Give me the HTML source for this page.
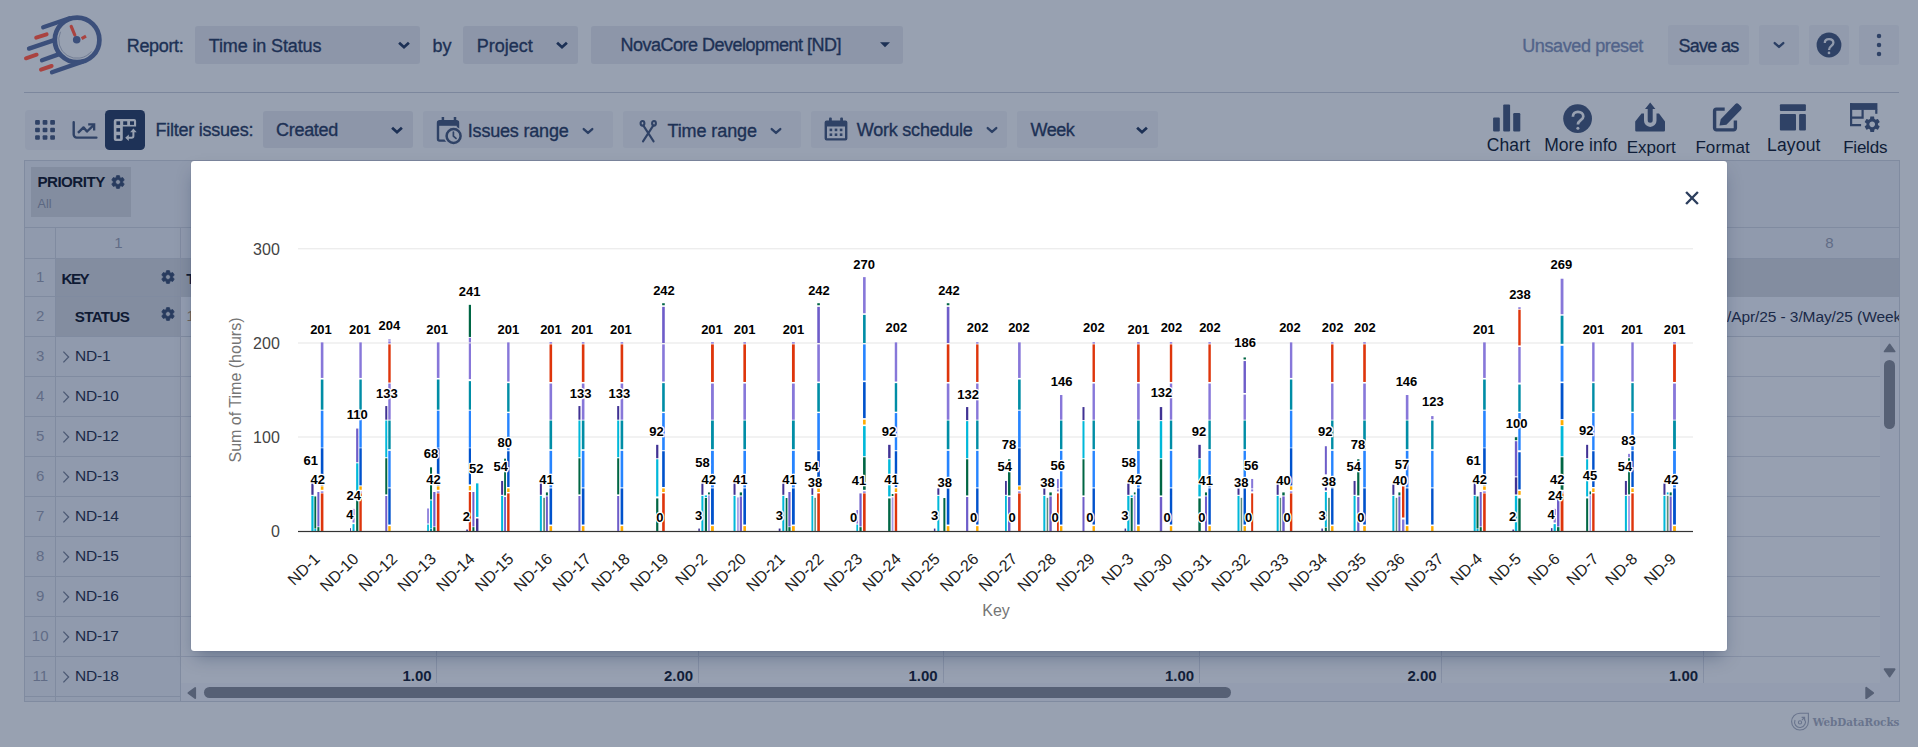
<!DOCTYPE html>
<html lang="en"><head><meta charset="utf-8"><title>Time in Status - Chart</title>
<style>html,body{margin:0;padding:0}body{width:1918px;height:747px;overflow:hidden;position:relative;background:#98a1b1;font-family:'Liberation Sans', sans-serif}span{display:block}</style></head>
<body>
<svg style="position:absolute;left:20.0px;top:8.0px;" width="90" height="72" viewBox="0 0 90 72">
<g fill="none" stroke-linecap="round">
 <g stroke="#3b4f7b" stroke-width="4.3">
  <circle cx="57.1" cy="31.9" r="22.3" stroke-width="4.7"/>
  <path d="M23.2 19.2 L49.5 10.2"/>
  <path d="M9 40.6 L33.5 32.4"/>
  <path d="M22 52.2 L38.5 46.4"/>
  <path d="M32 64.3 L62.5 53.6"/>
 </g>
 <path d="M40.4 24.1 A18.4 18.4 0 0 0 71.2 43.7" stroke="#68748d" stroke-width="0.8"/>
 <g stroke="#aa4340" stroke-linecap="butt">
  <path d="M16.2 29.6 L26.6 26.4" stroke-width="4" stroke-linecap="round"/>
  <path d="M6 50.3 L16.6 46.7" stroke-width="4" stroke-linecap="round"/>
  <path d="M21 61.6 L31.6 58" stroke-width="4" stroke-linecap="round"/>
  <path d="M51.2 18.4 L54.8 27" stroke-width="3.2" stroke-linecap="round"/>
  <path d="M61.6 30.6 L66 28.2" stroke-width="3.2"/>
 </g>
 <circle cx="56.7" cy="31.8" r="3.8" fill="#3b4f7b" stroke="none"/>
</g></svg>
<span style="position:absolute;left:126.80px;top:35.00px;font:400 18px/23px 'Liberation Sans', sans-serif;color:#1d3155;letter-spacing:-0.362px;white-space:pre;-webkit-text-stroke:0.35px #1d3155;">Report:</span>
<div style="position:absolute;left:195.0px;top:26.0px;width:225.0px;height:38.0px;background:#8d96a9;border-radius:3px;"></div>
<span style="position:absolute;left:208.80px;top:35.00px;font:400 18px/23px 'Liberation Sans', sans-serif;color:#1d3155;letter-spacing:-0.134px;white-space:pre;-webkit-text-stroke:0.35px #1d3155;">Time in Status</span>
<svg style="position:absolute;left:396.3px;top:36.6px;" width="16" height="16" viewBox="0 0 16 16"><path d="M3.10 5.80 L8 10.20 L12.90 5.80" fill="none" stroke="#1c3055" stroke-width="2.8" stroke-linecap="butt" stroke-linejoin="miter"/></svg>
<span style="position:absolute;left:432.60px;top:35.00px;font:400 18px/23px 'Liberation Sans', sans-serif;color:#1d3155;letter-spacing:-0.108px;white-space:pre;-webkit-text-stroke:0.35px #1d3155;">by</span>
<div style="position:absolute;left:463.3px;top:26.0px;width:114.7px;height:38.0px;background:#8d96a9;border-radius:3px;"></div>
<span style="position:absolute;left:476.80px;top:35.00px;font:400 18px/23px 'Liberation Sans', sans-serif;color:#1d3155;letter-spacing:-0.004px;white-space:pre;-webkit-text-stroke:0.35px #1d3155;">Project</span>
<svg style="position:absolute;left:554.2px;top:36.6px;" width="16" height="16" viewBox="0 0 16 16"><path d="M3.10 5.80 L8 10.20 L12.90 5.80" fill="none" stroke="#1c3055" stroke-width="2.8" stroke-linecap="butt" stroke-linejoin="miter"/></svg>
<div style="position:absolute;left:591.2px;top:26.0px;width:311.8px;height:38.0px;background:#8d96a9;border-radius:3px;"></div>
<span style="position:absolute;left:620.40px;top:34.20px;font:400 18px/23px 'Liberation Sans', sans-serif;color:#1d3155;letter-spacing:-0.504px;white-space:pre;-webkit-text-stroke:0.35px #1d3155;">NovaCore Development [ND]</span>
<svg style="position:absolute;left:878.0px;top:40.0px;" width="14" height="10" viewBox="0 0 14 10"><path d="M2 2.2 L12 2.2 L7 7.3 Z" fill="#1d3155"/></svg>
<span style="position:absolute;left:1522.20px;top:35.20px;font:400 18px/23px 'Liberation Sans', sans-serif;color:#52648a;letter-spacing:-0.377px;white-space:pre;-webkit-text-stroke:0.35px #52648a;">Unsaved preset</span>
<div style="position:absolute;left:1668.0px;top:25.0px;width:81.0px;height:40.0px;background:#929bad;border-radius:3px;"></div>
<span style="position:absolute;left:1678.40px;top:35.20px;font:400 18px/23px 'Liberation Sans', sans-serif;color:#1d3155;letter-spacing:-0.692px;white-space:pre;-webkit-text-stroke:0.35px #1d3155;">Save as</span>
<div style="position:absolute;left:1759.0px;top:25.0px;width:40.0px;height:40.0px;background:#929bad;border-radius:3px;"></div>
<svg style="position:absolute;left:1771.0px;top:36.8px;" width="16" height="16" viewBox="0 0 16 16"><path d="M3.70 6.05 L8 9.95 L12.30 6.05" fill="none" stroke="#2b3f64" stroke-width="2.3" stroke-linecap="round" stroke-linejoin="round"/></svg>
<div style="position:absolute;left:1809.0px;top:25.0px;width:40.0px;height:40.0px;background:#929bad;border-radius:3px;"></div>
<svg style="position:absolute;left:1815.0px;top:31.0px;" width="28" height="28" viewBox="0 0 28 28"><circle cx="14" cy="14" r="12.4" fill="#2f4266"/>
<path d="M9.8 12 C9.8 9.3 11.6 8.1 14 8.1 C16.6 8.1 18.4 9.5 18.4 11.8 C18.4 15 14 14.9 14 18.9" fill="none" stroke="#929bad" stroke-width="2.3"/>
<circle cx="14" cy="21.9" r="1.35" fill="#929bad"/></svg>
<div style="position:absolute;left:1859.0px;top:25.0px;width:40.0px;height:40.0px;background:#929bad;border-radius:3px;"></div>
<svg style="position:absolute;left:1873.0px;top:31.0px;" width="12" height="28" viewBox="0 0 12 28"><g fill="#2f4266"><circle cx="6" cy="5.1" r="2.25"/><circle cx="6" cy="14" r="2.25"/><circle cx="6" cy="22.9" r="2.25"/></g></svg>
<div style="position:absolute;left:24.0px;top:92.0px;width:1875.0px;height:1.0px;background:#7c879d;border-radius:0px;"></div>
<div style="position:absolute;left:25.0px;top:110.0px;width:120.0px;height:40.0px;background:#929bad;border-radius:4px;"></div>
<svg style="position:absolute;left:35.0px;top:120.0px;" width="21" height="21" viewBox="0 0 21 21"><g fill="#2f4266"><rect x="0.10" y="0.10" width="4.75" height="4.65" rx="1"/><rect x="0.10" y="7.65" width="4.75" height="4.65" rx="1"/><rect x="0.10" y="15.20" width="4.75" height="4.65" rx="1"/><rect x="7.65" y="0.10" width="4.75" height="4.65" rx="1"/><rect x="7.65" y="7.65" width="4.75" height="4.65" rx="1"/><rect x="7.65" y="15.20" width="4.75" height="4.65" rx="1"/><rect x="15.20" y="0.10" width="4.75" height="4.65" rx="1"/><rect x="15.20" y="7.65" width="4.75" height="4.65" rx="1"/><rect x="15.20" y="15.20" width="4.75" height="4.65" rx="1"/></g></svg>
<svg style="position:absolute;left:70.0px;top:118.0px;" width="30" height="24" viewBox="0 0 30 24"><g fill="none" stroke="#2f4266" stroke-width="2.4" stroke-linecap="round" stroke-linejoin="round">
<path d="M3.7 4.3 V16.6 a3 3 0 0 0 3 3 H26.4"/>
<path d="M8 14.8 L13.5 9.4 L17 13.5 L23.4 7.4" stroke-linecap="butt"/></g>
<path d="M18.2 5.2 H25.3 V12.4 L23 12.4 L23 9 L21.6 7.5 L18.2 7.5 Z" fill="#2f4266"/></svg>
<div style="position:absolute;left:105.0px;top:110.0px;width:40.0px;height:40.0px;background:#1e3257;border-radius:4.6px;"></div>
<svg style="position:absolute;left:112.0px;top:117.0px;" width="27" height="26" viewBox="0 0 27 26"><path d="M3.8 1.9 H22.1 a2 2 0 0 1 2 2 V9.5 H10.8 V22 a2 2 0 0 1 -2 2 H3.8 a2 2 0 0 1 -2 -2 V3.9 a2 2 0 0 1 2 -2 Z" fill="#98a1b1"/>
<g fill="#1e3257"><rect x="4.4" y="4.3" width="3.7" height="3.6"/><rect x="11.2" y="4.3" width="4" height="3.6"/><rect x="18" y="4.3" width="4" height="3.6"/>
<rect x="4.4" y="11.1" width="3.7" height="3.6"/><rect x="4.4" y="18.2" width="3.7" height="3.5"/></g>
<path d="M15.8 20.8 H19.6 Q21.4 20.8 21.4 19 V14.6" fill="none" stroke="#98a1b1" stroke-width="2"/>
<path d="M13.2 20.8 L16.8 17.6 V24 Z M21.4 11.4 L18.1 15.2 H24.7 Z" fill="#98a1b1"/></svg>
<span style="position:absolute;left:155.40px;top:119.40px;font:400 18px/23px 'Liberation Sans', sans-serif;color:#1d3155;letter-spacing:-0.231px;white-space:pre;-webkit-text-stroke:0.35px #1d3155;">Filter issues:</span>
<div style="position:absolute;left:263.0px;top:111.0px;width:150.0px;height:37.0px;background:#8d96a9;border-radius:3px;"></div>
<span style="position:absolute;left:276.00px;top:119.40px;font:400 18px/23px 'Liberation Sans', sans-serif;color:#1d3155;letter-spacing:-0.292px;white-space:pre;-webkit-text-stroke:0.35px #1d3155;">Created</span>
<svg style="position:absolute;left:389.0px;top:122.0px;" width="16" height="16" viewBox="0 0 16 16"><path d="M3.10 5.80 L8 10.20 L12.90 5.80" fill="none" stroke="#1c3055" stroke-width="2.8" stroke-linecap="butt" stroke-linejoin="miter"/></svg>
<div style="position:absolute;left:423.2px;top:111.0px;width:189.8px;height:37.0px;background:#929bad;border-radius:3px;"></div>
<svg style="position:absolute;left:435.0px;top:116.0px;" width="28" height="30" viewBox="0 0 28 30"><g fill="none" stroke="#2f4266" stroke-width="2.4" stroke-linejoin="round" stroke-linecap="round">
<path d="M4.6 5.2 H21.4 a1.6 1.6 0 0 1 1.6 1.6 V23 a1.6 1.6 0 0 1 -1.6 1.6 H4.6 a1.6 1.6 0 0 1 -1.6 -1.6 V6.8 a1.6 1.6 0 0 1 1.6 -1.6 Z"/>
<path d="M7.9 1.1 V5 M20 1.1 V5" stroke-width="2.5" stroke-linecap="butt"/></g>
<path d="M2.4 5 H23.6 V9.8 H2.4 Z" fill="#2f4266"/>
<circle cx="18.6" cy="20" r="9.6" fill="#929bad"/>
<circle cx="18.6" cy="20" r="7" fill="none" stroke="#2f4266" stroke-width="2.5"/>
<path d="M18.4 16 V20.2 L21 22.4" fill="none" stroke="#2f4266" stroke-width="1.7" stroke-linecap="round"/></svg>
<span style="position:absolute;left:467.80px;top:120.20px;font:400 18px/23px 'Liberation Sans', sans-serif;color:#1d3155;letter-spacing:-0.189px;white-space:pre;-webkit-text-stroke:0.35px #1d3155;">Issues range</span>
<svg style="position:absolute;left:579.5px;top:122.6px;" width="16" height="16" viewBox="0 0 16 16"><path d="M3.70 6.05 L8 9.95 L12.30 6.05" fill="none" stroke="#2b3f64" stroke-width="2.3" stroke-linecap="round" stroke-linejoin="round"/></svg>
<div style="position:absolute;left:623.0px;top:111.0px;width:178.0px;height:37.0px;background:#929bad;border-radius:3px;"></div>
<svg style="position:absolute;left:637.0px;top:118.0px;" width="24" height="26" viewBox="0 0 24 26"><g fill="none" stroke="#2f4266" stroke-width="2.1" stroke-linecap="round">
<path d="M6.4 7.6 L16.6 23.4 M16.2 7.6 L6 23.4"/>
<ellipse cx="5.5" cy="5.3" rx="1.9" ry="2.3"/><ellipse cx="17" cy="5.3" rx="1.9" ry="2.3"/></g></svg>
<span style="position:absolute;left:667.40px;top:120.20px;font:400 18px/23px 'Liberation Sans', sans-serif;color:#1d3155;letter-spacing:-0.078px;white-space:pre;-webkit-text-stroke:0.35px #1d3155;">Time range</span>
<svg style="position:absolute;left:767.8px;top:122.6px;" width="16" height="16" viewBox="0 0 16 16"><path d="M3.70 6.05 L8 9.95 L12.30 6.05" fill="none" stroke="#2b3f64" stroke-width="2.3" stroke-linecap="round" stroke-linejoin="round"/></svg>
<div style="position:absolute;left:811.2px;top:111.0px;width:195.6px;height:37.0px;background:#929bad;border-radius:3px;"></div>
<svg style="position:absolute;left:822.0px;top:116.0px;" width="28" height="28" viewBox="0 0 28 28"><path d="M4.6 4.6 H23.4 a2 2 0 0 1 2 2 V22.6 a2 2 0 0 1 -2 2 H4.6 a2 2 0 0 1 -2 -2 V6.6 a2 2 0 0 1 2 -2 Z M5 10.4 V22.2 H23 V10.4 Z" fill="#2f4266" fill-rule="evenodd"/>
<g fill="#2f4266"><rect x="7" y="1.6" width="2.8" height="5" rx="1"/><rect x="18.2" y="1.6" width="2.8" height="5" rx="1"/>
<rect x="7.6" y="12.6" width="2.6" height="2.6"/><rect x="12.7" y="12.6" width="2.6" height="2.6"/><rect x="17.8" y="12.6" width="2.6" height="2.6"/>
<rect x="7.6" y="17.4" width="2.6" height="2.6"/><rect x="12.7" y="17.4" width="2.6" height="2.6"/><rect x="17.8" y="17.4" width="2.6" height="2.6"/></g></svg>
<span style="position:absolute;left:856.80px;top:119.40px;font:400 18px/23px 'Liberation Sans', sans-serif;color:#1d3155;letter-spacing:-0.226px;white-space:pre;-webkit-text-stroke:0.35px #1d3155;">Work schedule</span>
<svg style="position:absolute;left:983.5px;top:122.2px;" width="16" height="16" viewBox="0 0 16 16"><path d="M3.70 6.05 L8 9.95 L12.30 6.05" fill="none" stroke="#2b3f64" stroke-width="2.3" stroke-linecap="round" stroke-linejoin="round"/></svg>
<div style="position:absolute;left:1017.0px;top:111.0px;width:141.0px;height:37.0px;background:#929bad;border-radius:3px;"></div>
<span style="position:absolute;left:1030.40px;top:118.60px;font:400 18px/23px 'Liberation Sans', sans-serif;color:#1d3155;letter-spacing:-0.422px;white-space:pre;-webkit-text-stroke:0.35px #1d3155;">Week</span>
<svg style="position:absolute;left:1134.0px;top:122.0px;" width="16" height="16" viewBox="0 0 16 16"><path d="M3.10 5.80 L8 10.20 L12.90 5.80" fill="none" stroke="#1c3055" stroke-width="2.8" stroke-linecap="butt" stroke-linejoin="miter"/></svg>
<svg style="position:absolute;left:1490.0px;top:102.0px;" width="34" height="32" viewBox="0 0 34 32"><g fill="#2f4266"><rect x="3.1" y="15.5" width="6.7" height="14" rx="1.1"/><rect x="13.2" y="2.4" width="6.9" height="27.1" rx="1.1"/><rect x="23.2" y="11.1" width="7.1" height="18.4" rx="1.1"/></g></svg>
<span style="position:absolute;left:1486.80px;top:134.20px;font:400 17.5px/23px 'Liberation Sans', sans-serif;color:#0f1d38;letter-spacing:0.101px;white-space:pre;">Chart</span>
<svg style="position:absolute;left:1562.0px;top:103.0px;" width="32" height="32" viewBox="0 0 32 32"><circle cx="15.6" cy="15.6" r="14.4" fill="#2f4266"/>
<path d="M10.9 13.7 C10.9 10.4 13 8.9 15.9 8.9 C19 8.9 21.3 10.7 21.3 13.4 C21.3 17.3 15.9 17 15.9 21.6" fill="none" stroke="#98a1b1" stroke-width="2.7"/>
<circle cx="15.9" cy="25.3" r="1.55" fill="#98a1b1"/></svg>
<span style="position:absolute;left:1544.20px;top:134.20px;font:400 17.5px/23px 'Liberation Sans', sans-serif;color:#0f1d38;letter-spacing:0.027px;white-space:pre;">More info</span>
<svg style="position:absolute;left:1632.0px;top:100.0px;" width="36" height="34" viewBox="0 0 36 34"><path d="M4.4 31.4 a1.2 1.2 0 0 1 -1.2 -1.2 V21.5 L9.5 13.5 H12 V20.7 a6.25 6.25 0 0 0 12.5 0 V13.5 H27 L33 21.5 V30.2 a1.2 1.2 0 0 1 -1.2 1.2 Z" fill="#2f4266"/>
<path d="M18.2 2.6 L23.4 8.9 H20.7 V20.2 a2.5 2.5 0 0 1 -5 0 V8.9 H13 Z" fill="#2f4266"/></svg>
<span style="position:absolute;left:1626.80px;top:137.30px;font:400 17px/22px 'Liberation Sans', sans-serif;color:#0f1d38;letter-spacing:-0.023px;white-space:pre;">Export</span>
<svg style="position:absolute;left:1710.0px;top:100.0px;" width="36" height="34" viewBox="0 0 36 34"><path d="M14.7 9.1 H6.4 a1.8 1.8 0 0 0 -1.8 1.8 V28.1 a1.8 1.8 0 0 0 1.8 1.8 H23.6 a1.8 1.8 0 0 0 1.8 -1.8 V20.4" fill="none" stroke="#2f4266" stroke-width="3.4"/>
<path d="M9.5 25.6 L10.7 19.2 L25.4 4 a2.2 2.2 0 0 1 3.1 0 L31 6.6 a2.2 2.2 0 0 1 0 3.1 L16.4 24.8 Z" fill="#2f4266" stroke="#98a1b1" stroke-width="1.6" paint-order="stroke"/></svg>
<span style="position:absolute;left:1695.40px;top:137.30px;font:400 17px/22px 'Liberation Sans', sans-serif;color:#0f1d38;letter-spacing:0.093px;white-space:pre;">Format</span>
<svg style="position:absolute;left:1777.0px;top:102.0px;" width="32" height="32" viewBox="0 0 32 32"><g fill="#2f4266"><rect x="2.9" y="2.3" width="26" height="6.6" rx="1"/><rect x="2.9" y="11.9" width="16.1" height="16.5" rx="1"/><rect x="22.1" y="11.9" width="6.8" height="16.5" rx="1"/></g></svg>
<span style="position:absolute;left:1767.00px;top:134.20px;font:400 17.5px/23px 'Liberation Sans', sans-serif;color:#0f1d38;letter-spacing:0.176px;white-space:pre;">Layout</span>
<svg style="position:absolute;left:1847.0px;top:100.0px;" width="36" height="34" viewBox="0 0 36 34"><g fill="none" stroke="#2f4266" stroke-width="2.2"><path d="M4.1 3.2 V25.1 H14.1"/><path d="M3 17.6 H15.6 V9.5"/><path d="M29.3 9.5 V13.8"/></g>
<rect x="3" y="3.1" width="27.4" height="6.8" fill="#2f4266"/>
<g transform="translate(25.2 24.3) scale(0.8) translate(-12 -12)"><path d="M19.14 12.94c.04-.3.06-.61.06-.94 0-.32-.02-.64-.07-.94l2.03-1.58c.18-.14.23-.41.12-.61l-1.92-3.32c-.12-.22-.37-.29-.59-.22l-2.39.96c-.5-.38-1.03-.7-1.62-.94l-.36-2.54c-.04-.24-.24-.41-.48-.41h-3.84c-.24 0-.43.17-.47.41l-.36 2.54c-.59.24-1.13.57-1.62.94l-2.39-.96c-.22-.08-.47 0-.59.22L2.74 8.87c-.12.21-.08.47.12.61l2.03 1.58c-.05.3-.09.63-.09.94s.02.64.07.94l-2.03 1.58c-.18.14-.23.41-.12.61l1.92 3.32c.12.22.37.29.59.22l2.39-.96c.5.38 1.03.7 1.62.94l.36 2.54c.05.24.24.41.48.41h3.84c.24 0 .44-.17.47-.41l.36-2.54c.59-.24 1.13-.56 1.62-.94l2.39.96c.22.08.47 0 .59-.22l1.92-3.32c.12-.22.07-.47-.12-.61l-2.01-1.58zM12 15.6c-1.98 0-3.6-1.62-3.6-3.6s1.62-3.6 3.6-3.6 3.6 1.62 3.6 3.6-1.62 3.6-3.6 3.6z" fill="#2f4266" stroke="#98a1b1" stroke-width="1.4" paint-order="stroke"/></g></svg>
<span style="position:absolute;left:1843.20px;top:137.30px;font:400 17px/22px 'Liberation Sans', sans-serif;color:#0f1d38;letter-spacing:-0.227px;white-space:pre;">Fields</span>
<div style="position:absolute;left:24.0px;top:160.0px;width:1876.0px;height:542.0px;background:#909aad;border-radius:0px;box-sizing:border-box;border:1px solid #808ba0;"></div>
<div style="position:absolute;left:31.0px;top:167.0px;width:100.0px;height:50.0px;background:#838da0;border-radius:0px;"></div>
<span style="position:absolute;left:37.40px;top:172.30px;font:700 15.2px/20px 'Liberation Sans', sans-serif;color:#0f1a33;letter-spacing:-0.542px;white-space:pre;">PRIORITY</span>
<svg style="position:absolute;left:110.0px;top:174.0px;" width="16" height="16" viewBox="0 0 24 24"><path d="M19.14 12.94c.04-.3.06-.61.06-.94 0-.32-.02-.64-.07-.94l2.03-1.58c.18-.14.23-.41.12-.61l-1.92-3.32c-.12-.22-.37-.29-.59-.22l-2.39.96c-.5-.38-1.03-.7-1.62-.94l-.36-2.54c-.04-.24-.24-.41-.48-.41h-3.84c-.24 0-.43.17-.47.41l-.36 2.54c-.59.24-1.13.57-1.62.94l-2.39-.96c-.22-.08-.47 0-.59.22L2.74 8.87c-.12.21-.08.47.12.61l2.03 1.58c-.05.3-.09.63-.09.94s.02.64.07.94l-2.03 1.58c-.18.14-.23.41-.12.61l1.92 3.32c.12.22.37.29.59.22l2.39-.96c.5.38 1.03.7 1.62.94l.36 2.54c.05.24.24.41.48.41h3.84c.24 0 .44-.17.47-.41l.36-2.54c.59-.24 1.13-.56 1.62-.94l2.39.96c.22.08.47 0 .59-.22l1.92-3.32c.12-.22.07-.47-.12-.61l-2.01-1.58zM12 15.6c-1.98 0-3.6-1.62-3.6-3.6s1.62-3.6 3.6-3.6 3.6 1.62 3.6 3.6-1.62 3.6-3.6 3.6z" fill="#283b5e" stroke="#283b5e" stroke-width="1.1"/></svg>
<span style="position:absolute;left:37.60px;top:195.80px;font:400 12.5px/16px 'Liberation Sans', sans-serif;color:#5c6882;letter-spacing:0.031px;white-space:pre;">All</span>
<div style="position:absolute;left:181.0px;top:336.0px;width:1699.0px;height:347.0px;background:#97a0b1;border-radius:0px;"></div>
<div style="position:absolute;left:181.0px;top:683.0px;width:1718.0px;height:18.0px;background:#949db0;border-radius:0px;"></div>
<div style="position:absolute;left:1880.0px;top:336.0px;width:19.0px;height:365.0px;background:#949db0;border-radius:0px;"></div>
<div style="position:absolute;left:56.0px;top:258.5px;width:1843.0px;height:38.0px;background:#838da0;border-radius:0px;"></div>
<div style="position:absolute;left:56.0px;top:296.5px;width:125.0px;height:40.0px;background:#838da0;border-radius:0px;"></div>
<div style="position:absolute;left:181.0px;top:296.5px;width:1718.0px;height:40.0px;background:#949eb1;border-radius:0px;"></div>
<div style="position:absolute;left:25.0px;top:227.0px;width:1874.0px;height:1.0px;background:#808ba0;border-radius:0px;"></div>
<div style="position:absolute;left:25.0px;top:258.0px;width:1874.0px;height:1.0px;background:#808ba0;border-radius:0px;"></div>
<div style="position:absolute;left:25.0px;top:296.0px;width:156.0px;height:1.0px;background:#808ba0;border-radius:0px;"></div>
<div style="position:absolute;left:25.0px;top:336.0px;width:1874.0px;height:1.0px;background:#808ba0;border-radius:0px;"></div>
<div style="position:absolute;left:25.0px;top:376.0px;width:156.0px;height:1.0px;background:#808ba0;border-radius:0px;"></div>
<div style="position:absolute;left:181.0px;top:376.0px;width:1699.0px;height:1.0px;background:#858fa4;border-radius:0px;"></div>
<div style="position:absolute;left:25.0px;top:416.0px;width:156.0px;height:1.0px;background:#808ba0;border-radius:0px;"></div>
<div style="position:absolute;left:181.0px;top:416.0px;width:1699.0px;height:1.0px;background:#858fa4;border-radius:0px;"></div>
<div style="position:absolute;left:25.0px;top:456.0px;width:156.0px;height:1.0px;background:#808ba0;border-radius:0px;"></div>
<div style="position:absolute;left:181.0px;top:456.0px;width:1699.0px;height:1.0px;background:#858fa4;border-radius:0px;"></div>
<div style="position:absolute;left:25.0px;top:496.0px;width:156.0px;height:1.0px;background:#808ba0;border-radius:0px;"></div>
<div style="position:absolute;left:181.0px;top:496.0px;width:1699.0px;height:1.0px;background:#858fa4;border-radius:0px;"></div>
<div style="position:absolute;left:25.0px;top:536.0px;width:156.0px;height:1.0px;background:#808ba0;border-radius:0px;"></div>
<div style="position:absolute;left:181.0px;top:536.0px;width:1699.0px;height:1.0px;background:#858fa4;border-radius:0px;"></div>
<div style="position:absolute;left:25.0px;top:576.0px;width:156.0px;height:1.0px;background:#808ba0;border-radius:0px;"></div>
<div style="position:absolute;left:181.0px;top:576.0px;width:1699.0px;height:1.0px;background:#858fa4;border-radius:0px;"></div>
<div style="position:absolute;left:25.0px;top:616.0px;width:156.0px;height:1.0px;background:#808ba0;border-radius:0px;"></div>
<div style="position:absolute;left:181.0px;top:616.0px;width:1699.0px;height:1.0px;background:#858fa4;border-radius:0px;"></div>
<div style="position:absolute;left:25.0px;top:656.0px;width:156.0px;height:1.0px;background:#808ba0;border-radius:0px;"></div>
<div style="position:absolute;left:181.0px;top:656.0px;width:1699.0px;height:1.0px;background:#858fa4;border-radius:0px;"></div>
<div style="position:absolute;left:25.0px;top:696.0px;width:156.0px;height:1.0px;background:#808ba0;border-radius:0px;"></div>
<div style="position:absolute;left:55.0px;top:227.0px;width:1.0px;height:474.0px;background:#808ba0;border-radius:0px;"></div>
<div style="position:absolute;left:180.0px;top:227.0px;width:1.0px;height:474.0px;background:#808ba0;border-radius:0px;"></div>
<div style="position:absolute;left:436.0px;top:227.0px;width:1.0px;height:456.0px;background:#858fa4;border-radius:0px;"></div>
<div style="position:absolute;left:698.0px;top:227.0px;width:1.0px;height:456.0px;background:#858fa4;border-radius:0px;"></div>
<div style="position:absolute;left:943.0px;top:227.0px;width:1.0px;height:456.0px;background:#858fa4;border-radius:0px;"></div>
<div style="position:absolute;left:1199.0px;top:227.0px;width:1.0px;height:456.0px;background:#858fa4;border-radius:0px;"></div>
<div style="position:absolute;left:1441.0px;top:227.0px;width:1.0px;height:456.0px;background:#858fa4;border-radius:0px;"></div>
<div style="position:absolute;left:1703.0px;top:227.0px;width:1.0px;height:456.0px;background:#858fa4;border-radius:0px;"></div>
<span style="position:absolute;left:114.23px;top:232.80px;font:400 15px/20px 'Liberation Sans', sans-serif;color:#616c86;letter-spacing:0.000px;white-space:pre;">1</span>
<span style="position:absolute;left:1825.13px;top:233.00px;font:400 15px/20px 'Liberation Sans', sans-serif;color:#616c86;letter-spacing:0.000px;white-space:pre;">8</span>
<span style="position:absolute;left:36.03px;top:266.70px;font:400 15px/20px 'Liberation Sans', sans-serif;color:#616c86;letter-spacing:0.000px;white-space:pre;">1</span>
<span style="position:absolute;left:36.03px;top:305.90px;font:400 15px/20px 'Liberation Sans', sans-serif;color:#616c86;letter-spacing:0.000px;white-space:pre;">2</span>
<span style="position:absolute;left:36.03px;top:345.90px;font:400 15px/20px 'Liberation Sans', sans-serif;color:#616c86;letter-spacing:0.000px;white-space:pre;">3</span>
<span style="position:absolute;left:36.03px;top:385.90px;font:400 15px/20px 'Liberation Sans', sans-serif;color:#616c86;letter-spacing:0.000px;white-space:pre;">4</span>
<span style="position:absolute;left:36.03px;top:425.90px;font:400 15px/20px 'Liberation Sans', sans-serif;color:#616c86;letter-spacing:0.000px;white-space:pre;">5</span>
<span style="position:absolute;left:36.03px;top:465.90px;font:400 15px/20px 'Liberation Sans', sans-serif;color:#616c86;letter-spacing:0.000px;white-space:pre;">6</span>
<span style="position:absolute;left:36.03px;top:505.90px;font:400 15px/20px 'Liberation Sans', sans-serif;color:#616c86;letter-spacing:0.000px;white-space:pre;">7</span>
<span style="position:absolute;left:36.03px;top:545.90px;font:400 15px/20px 'Liberation Sans', sans-serif;color:#616c86;letter-spacing:0.000px;white-space:pre;">8</span>
<span style="position:absolute;left:36.03px;top:585.90px;font:400 15px/20px 'Liberation Sans', sans-serif;color:#616c86;letter-spacing:0.000px;white-space:pre;">9</span>
<span style="position:absolute;left:31.86px;top:625.90px;font:400 15px/20px 'Liberation Sans', sans-serif;color:#616c86;letter-spacing:0.000px;white-space:pre;">10</span>
<span style="position:absolute;left:32.41px;top:665.90px;font:400 15px/20px 'Liberation Sans', sans-serif;color:#616c86;letter-spacing:0.000px;white-space:pre;">11</span>
<span style="position:absolute;left:61.40px;top:268.80px;font:700 15.2px/20px 'Liberation Sans', sans-serif;color:#0f1a33;letter-spacing:-1.478px;white-space:pre;">KEY</span>
<svg style="position:absolute;left:160.4px;top:268.6px;" width="16" height="16" viewBox="0 0 24 24"><path d="M19.14 12.94c.04-.3.06-.61.06-.94 0-.32-.02-.64-.07-.94l2.03-1.58c.18-.14.23-.41.12-.61l-1.92-3.32c-.12-.22-.37-.29-.59-.22l-2.39.96c-.5-.38-1.03-.7-1.62-.94l-.36-2.54c-.04-.24-.24-.41-.48-.41h-3.84c-.24 0-.43.17-.47.41l-.36 2.54c-.59.24-1.13.57-1.62.94l-2.39-.96c-.22-.08-.47 0-.59.22L2.74 8.87c-.12.21-.08.47.12.61l2.03 1.58c-.05.3-.09.63-.09.94s.02.64.07.94l-2.03 1.58c-.18.14-.23.41-.12.61l1.92 3.32c.12.22.37.29.59.22l2.39-.96c.5.38 1.03.7 1.62.94l.36 2.54c.05.24.24.41.48.41h3.84c.24 0 .44-.17.47-.41l.36-2.54c.59-.24 1.13-.56 1.62-.94l2.39.96c.22.08.47 0 .59-.22l1.92-3.32c.12-.22.07-.47-.12-.61l-2.01-1.58zM12 15.6c-1.98 0-3.6-1.62-3.6-3.6s1.62-3.6 3.6-3.6 3.6 1.62 3.6 3.6-1.62 3.6-3.6 3.6z" fill="#283b5e" stroke="#283b5e" stroke-width="1.1"/></svg>
<span style="position:absolute;left:74.80px;top:306.70px;font:700 15.2px/20px 'Liberation Sans', sans-serif;color:#0f1a33;letter-spacing:-0.683px;white-space:pre;">STATUS</span>
<svg style="position:absolute;left:160.4px;top:306.0px;" width="16" height="16" viewBox="0 0 24 24"><path d="M19.14 12.94c.04-.3.06-.61.06-.94 0-.32-.02-.64-.07-.94l2.03-1.58c.18-.14.23-.41.12-.61l-1.92-3.32c-.12-.22-.37-.29-.59-.22l-2.39.96c-.5-.38-1.03-.7-1.62-.94l-.36-2.54c-.04-.24-.24-.41-.48-.41h-3.84c-.24 0-.43.17-.47.41l-.36 2.54c-.59.24-1.13.57-1.62.94l-2.39-.96c-.22-.08-.47 0-.59.22L2.74 8.87c-.12.21-.08.47.12.61l2.03 1.58c-.05.3-.09.63-.09.94s.02.64.07.94l-2.03 1.58c-.18.14-.23.41-.12.61l1.92 3.32c.12.22.37.29.59.22l2.39-.96c.5.38 1.03.7 1.62.94l.36 2.54c.05.24.24.41.48.41h3.84c.24 0 .44-.17.47-.41l.36-2.54c.59-.24 1.13-.56 1.62-.94l2.39.96c.22.08.47 0 .59-.22l1.92-3.32c.12-.22.07-.47-.12-.61l-2.01-1.58zM12 15.6c-1.98 0-3.6-1.62-3.6-3.6s1.62-3.6 3.6-3.6 3.6 1.62 3.6 3.6-1.62 3.6-3.6 3.6z" fill="#283b5e" stroke="#283b5e" stroke-width="1.1"/></svg>
<span style="position:absolute;left:186.20px;top:268.80px;font:700 15.2px/20px 'Liberation Sans', sans-serif;color:#0f1a33;letter-spacing:0.000px;white-space:pre;">TIME</span>
<span style="position:absolute;left:186.60px;top:306.40px;font:400 15px/20px 'Liberation Sans', sans-serif;color:#6f6257;letter-spacing:0.000px;white-space:pre;">1</span>
<svg style="position:absolute;left:60.0px;top:348.5px;" width="12" height="16" viewBox="0 0 12 16"><path d="M3.4 2.6 L8.6 8 L3.4 13.4" fill="none" stroke="#4d5a75" stroke-width="1.3"/></svg>
<span style="position:absolute;left:75.00px;top:346.30px;font:400 15.5px/20px 'Liberation Sans', sans-serif;color:#1a2947;letter-spacing:-0.193px;white-space:pre;">ND-1</span>
<svg style="position:absolute;left:60.0px;top:388.5px;" width="12" height="16" viewBox="0 0 12 16"><path d="M3.4 2.6 L8.6 8 L3.4 13.4" fill="none" stroke="#4d5a75" stroke-width="1.3"/></svg>
<span style="position:absolute;left:75.00px;top:386.30px;font:400 15.5px/20px 'Liberation Sans', sans-serif;color:#1a2947;letter-spacing:-0.199px;white-space:pre;">ND-10</span>
<svg style="position:absolute;left:60.0px;top:428.5px;" width="12" height="16" viewBox="0 0 12 16"><path d="M3.4 2.6 L8.6 8 L3.4 13.4" fill="none" stroke="#4d5a75" stroke-width="1.3"/></svg>
<span style="position:absolute;left:75.00px;top:426.30px;font:400 15.5px/20px 'Liberation Sans', sans-serif;color:#1a2947;letter-spacing:-0.199px;white-space:pre;">ND-12</span>
<svg style="position:absolute;left:60.0px;top:468.5px;" width="12" height="16" viewBox="0 0 12 16"><path d="M3.4 2.6 L8.6 8 L3.4 13.4" fill="none" stroke="#4d5a75" stroke-width="1.3"/></svg>
<span style="position:absolute;left:75.00px;top:466.30px;font:400 15.5px/20px 'Liberation Sans', sans-serif;color:#1a2947;letter-spacing:-0.199px;white-space:pre;">ND-13</span>
<svg style="position:absolute;left:60.0px;top:508.5px;" width="12" height="16" viewBox="0 0 12 16"><path d="M3.4 2.6 L8.6 8 L3.4 13.4" fill="none" stroke="#4d5a75" stroke-width="1.3"/></svg>
<span style="position:absolute;left:75.00px;top:506.30px;font:400 15.5px/20px 'Liberation Sans', sans-serif;color:#1a2947;letter-spacing:-0.199px;white-space:pre;">ND-14</span>
<svg style="position:absolute;left:60.0px;top:548.5px;" width="12" height="16" viewBox="0 0 12 16"><path d="M3.4 2.6 L8.6 8 L3.4 13.4" fill="none" stroke="#4d5a75" stroke-width="1.3"/></svg>
<span style="position:absolute;left:75.00px;top:546.30px;font:400 15.5px/20px 'Liberation Sans', sans-serif;color:#1a2947;letter-spacing:-0.199px;white-space:pre;">ND-15</span>
<svg style="position:absolute;left:60.0px;top:588.5px;" width="12" height="16" viewBox="0 0 12 16"><path d="M3.4 2.6 L8.6 8 L3.4 13.4" fill="none" stroke="#4d5a75" stroke-width="1.3"/></svg>
<span style="position:absolute;left:75.00px;top:586.30px;font:400 15.5px/20px 'Liberation Sans', sans-serif;color:#1a2947;letter-spacing:-0.199px;white-space:pre;">ND-16</span>
<svg style="position:absolute;left:60.0px;top:628.5px;" width="12" height="16" viewBox="0 0 12 16"><path d="M3.4 2.6 L8.6 8 L3.4 13.4" fill="none" stroke="#4d5a75" stroke-width="1.3"/></svg>
<span style="position:absolute;left:75.00px;top:626.30px;font:400 15.5px/20px 'Liberation Sans', sans-serif;color:#1a2947;letter-spacing:-0.199px;white-space:pre;">ND-17</span>
<svg style="position:absolute;left:60.0px;top:668.5px;" width="12" height="16" viewBox="0 0 12 16"><path d="M3.4 2.6 L8.6 8 L3.4 13.4" fill="none" stroke="#4d5a75" stroke-width="1.3"/></svg>
<span style="position:absolute;left:75.00px;top:666.30px;font:400 15.5px/20px 'Liberation Sans', sans-serif;color:#1a2947;letter-spacing:-0.199px;white-space:pre;">ND-18</span>
<div style="position:absolute;left:1703px;top:297px;width:196px;height:39px;overflow:hidden">
<span style="position:absolute;left:24.00px;top:10.00px;font:400 15.5px/20px 'Liberation Sans', sans-serif;color:#1a2947;letter-spacing:-0.090px;white-space:pre;">/Apr/25 - 3/May/25 (Week 18)</span>
</div>
<span style="position:absolute;left:402.40px;top:665.50px;font:700 15px/20px 'Liberation Sans', sans-serif;color:#121f3a;letter-spacing:0.000px;white-space:pre;">1.00</span>
<span style="position:absolute;left:663.90px;top:665.50px;font:700 15px/20px 'Liberation Sans', sans-serif;color:#121f3a;letter-spacing:0.000px;white-space:pre;">2.00</span>
<span style="position:absolute;left:908.40px;top:665.50px;font:700 15px/20px 'Liberation Sans', sans-serif;color:#121f3a;letter-spacing:0.000px;white-space:pre;">1.00</span>
<span style="position:absolute;left:1164.90px;top:665.50px;font:700 15px/20px 'Liberation Sans', sans-serif;color:#121f3a;letter-spacing:0.000px;white-space:pre;">1.00</span>
<span style="position:absolute;left:1407.40px;top:665.50px;font:700 15px/20px 'Liberation Sans', sans-serif;color:#121f3a;letter-spacing:0.000px;white-space:pre;">2.00</span>
<span style="position:absolute;left:1668.90px;top:665.50px;font:700 15px/20px 'Liberation Sans', sans-serif;color:#121f3a;letter-spacing:0.000px;white-space:pre;">1.00</span>
<svg style="position:absolute;left:1882.0px;top:341.0px;" width="16" height="14" viewBox="0 0 16 14"><path d="M7.6 3.4 L12.6 10.4 H2.6 Z" fill="#566075" stroke="#566075" stroke-width="1.8" stroke-linejoin="round"/></svg>
<div style="position:absolute;left:1884.0px;top:359.5px;width:11.2px;height:69.5px;background:#566075;border-radius:5.6px;"></div>
<svg style="position:absolute;left:1882.0px;top:666.0px;" width="16" height="14" viewBox="0 0 16 14"><path d="M7.6 10.6 L12.6 3.2 H2.6 Z" fill="#566075" stroke="#566075" stroke-width="1.8" stroke-linejoin="round"/></svg>
<svg style="position:absolute;left:186.0px;top:685.0px;" width="12" height="16" viewBox="0 0 12 16"><path d="M2.4 8 L9.2 3 V13 Z" fill="#566075" stroke="#566075" stroke-width="1.8" stroke-linejoin="round"/></svg>
<div style="position:absolute;left:204.0px;top:686.6px;width:1026.8px;height:11.4px;background:#566075;border-radius:5.7px;"></div>
<svg style="position:absolute;left:1863.0px;top:685.0px;" width="12" height="16" viewBox="0 0 12 16"><path d="M10.2 8 L3.2 2.8 V13.2 Z" fill="#566075" stroke="#566075" stroke-width="1.8" stroke-linejoin="round"/></svg>
<svg style="position:absolute;left:1789.6px;top:712.2px;" width="20" height="20" viewBox="0 0 20 20"><g fill="none" stroke="#69748d" stroke-width="1.1"><path d="M10 1.2 H18.4 V9.6 A8.4 8.4 0 1 1 10 1.2 Z"/><circle cx="10" cy="10.4" r="1.6"/><path d="M5 8 A5.4 5.4 0 1 0 14.4 7"/><path d="M11.6 5.4 H14.6 V8.4 M14.6 5.4 L12 8"/></g></svg>
<span style="position:absolute;left:1812.80px;top:715.10px;font:700 11.5px/15px 'DejaVu Serif Condensed', 'DejaVu Serif', serif;color:#69748d;letter-spacing:0.012px;white-space:pre;">WebDataRocks</span>
<div style="position:absolute;left:191px;top:161px;width:1536px;height:490px;background:#fff;border-radius:3px;box-shadow:0 0 1px rgba(9,30,66,.31),0 9px 17px -4px rgba(9,30,66,.34)"></div>
<svg style="position:absolute;left:1684.0px;top:190.0px;" width="16" height="16" viewBox="0 0 16 16"><path d="M2.1 2 L13.9 14 M13.9 2 L2.1 14" fill="none" stroke="#2c3e5d" stroke-width="2.4"/></svg>
<svg style="position:absolute;left:0;top:0" width="1918" height="747" viewBox="0 0 1918 747" font-family="'Liberation Sans', sans-serif"><rect x="298" y="248.3" width="1395" height="1" fill="#e6e6e6"/>
<rect x="298" y="342.5" width="1395" height="1" fill="#e6e6e6"/>
<rect x="298" y="436.5" width="1395" height="1" fill="#e6e6e6"/>
<rect x="311.36" y="483.37" width="2.21" height="11.45" fill="#403294"/>
<rect x="311.36" y="495.82" width="2.21" height="35.14" fill="#00B8D9"/>
<rect x="314.37" y="496.43" width="1.81" height="32.13" fill="#006644"/>
<rect x="314.37" y="528.96" width="1.81" height="2.01" fill="#00B8D9"/>
<rect x="317.38" y="492.01" width="2.01" height="34.54" fill="#6E5DC9"/>
<rect x="317.38" y="527.15" width="2.01" height="3.82" fill="#006644"/>
<rect x="320.80" y="493.41" width="2.61" height="37.55" fill="#DE350B"/>
<rect x="320.80" y="491.41" width="2.61" height="1.41" fill="#8777D9"/>
<rect x="320.80" y="486.39" width="2.61" height="3.41" fill="#FFAB00"/>
<rect x="320.80" y="448.23" width="2.61" height="37.15" fill="#0052CC"/>
<rect x="320.80" y="410.68" width="2.61" height="36.95" fill="#2684FF"/>
<rect x="320.80" y="379.54" width="2.61" height="30.14" fill="#008DA6"/>
<rect x="320.80" y="342.39" width="2.61" height="35.54" fill="#8777D9"/>
<rect x="350.07" y="528.15" width="0.91" height="2.81" fill="#403294"/>
<rect x="352.52" y="508.88" width="2.01" height="13.65" fill="#8777D9"/>
<rect x="352.52" y="524.14" width="2.01" height="6.83" fill="#00B8D9"/>
<rect x="356.14" y="428.55" width="2.21" height="33.73" fill="#6E5DC9"/>
<rect x="356.14" y="463.29" width="2.21" height="36.14" fill="#00B8D9"/>
<rect x="356.14" y="500.44" width="2.21" height="30.52" fill="#006644"/>
<rect x="359.35" y="493.41" width="2.41" height="37.55" fill="#DE350B"/>
<rect x="359.35" y="491.41" width="2.41" height="1.41" fill="#8777D9"/>
<rect x="359.35" y="486.39" width="2.41" height="3.41" fill="#FFAB00"/>
<rect x="359.35" y="448.23" width="2.41" height="37.15" fill="#0052CC"/>
<rect x="359.35" y="410.68" width="2.41" height="36.95" fill="#2684FF"/>
<rect x="359.35" y="379.54" width="2.41" height="30.14" fill="#008DA6"/>
<rect x="359.35" y="342.39" width="2.41" height="35.54" fill="#8777D9"/>
<rect x="385.26" y="406.06" width="2.01" height="13.65" fill="#403294"/>
<rect x="385.26" y="420.52" width="2.01" height="36.75" fill="#00B8D9"/>
<rect x="385.26" y="458.27" width="2.01" height="36.14" fill="#006644"/>
<rect x="385.26" y="496.02" width="2.01" height="34.94" fill="#6E5DC9"/>
<rect x="388.27" y="526.14" width="2.41" height="4.82" fill="#FFAB00"/>
<rect x="388.27" y="488.39" width="2.41" height="36.14" fill="#0052CC"/>
<rect x="388.27" y="450.84" width="2.41" height="36.55" fill="#2684FF"/>
<rect x="388.27" y="420.52" width="2.41" height="28.71" fill="#008DA6"/>
<rect x="388.27" y="383.55" width="2.41" height="36.16" fill="#8777D9"/>
<rect x="388.27" y="344.40" width="2.41" height="38.15" fill="#DE350B"/>
<rect x="388.27" y="341.39" width="2.41" height="2.01" fill="#8777D9"/>
<rect x="388.27" y="339.38" width="2.41" height="1.20" fill="#8777D9"/>
<rect x="427.17" y="508.47" width="1.71" height="15.06" fill="#8777D9"/>
<rect x="427.17" y="524.54" width="1.71" height="6.43" fill="#00B8D9"/>
<rect x="430.03" y="467.31" width="2.01" height="32.13" fill="#006644"/>
<rect x="430.03" y="500.44" width="2.01" height="28.11" fill="#00B8D9"/>
<rect x="430.03" y="528.96" width="2.01" height="2.01" fill="#008DA6"/>
<rect x="433.25" y="492.01" width="2.21" height="34.54" fill="#6E5DC9"/>
<rect x="433.25" y="527.15" width="2.21" height="3.82" fill="#006644"/>
<rect x="436.86" y="493.41" width="2.61" height="37.55" fill="#DE350B"/>
<rect x="436.86" y="491.41" width="2.61" height="1.41" fill="#8777D9"/>
<rect x="436.86" y="486.39" width="2.61" height="3.41" fill="#FFAB00"/>
<rect x="436.86" y="448.23" width="2.61" height="37.15" fill="#0052CC"/>
<rect x="436.86" y="410.68" width="2.61" height="36.95" fill="#2684FF"/>
<rect x="436.86" y="379.54" width="2.61" height="30.14" fill="#008DA6"/>
<rect x="436.86" y="342.39" width="2.61" height="35.54" fill="#8777D9"/>
<rect x="466.18" y="529.56" width="1.81" height="1.41" fill="#403294"/>
<rect x="468.79" y="492.01" width="2.21" height="38.96" fill="#DE350B"/>
<rect x="468.79" y="485.98" width="2.21" height="4.42" fill="#FFAB00"/>
<rect x="468.79" y="448.23" width="2.21" height="36.14" fill="#0052CC"/>
<rect x="468.79" y="410.68" width="2.21" height="36.95" fill="#2684FF"/>
<rect x="468.79" y="381.14" width="2.21" height="28.53" fill="#008DA6"/>
<rect x="468.79" y="343.39" width="2.21" height="35.74" fill="#8777D9"/>
<rect x="468.79" y="337.77" width="2.21" height="4.62" fill="#8777D9"/>
<rect x="468.79" y="304.84" width="2.21" height="32.13" fill="#006644"/>
<rect x="472.40" y="492.01" width="2.01" height="34.54" fill="#6E5DC9"/>
<rect x="472.40" y="527.15" width="2.01" height="3.82" fill="#006644"/>
<rect x="476.02" y="483.37" width="2.41" height="33.53" fill="#00B8D9"/>
<rect x="476.02" y="518.51" width="2.41" height="12.45" fill="#403294"/>
<rect x="501.12" y="480.96" width="2.01" height="13.86" fill="#403294"/>
<rect x="501.12" y="495.82" width="2.01" height="35.14" fill="#00B8D9"/>
<rect x="504.13" y="458.67" width="1.81" height="36.75" fill="#006644"/>
<rect x="504.13" y="497.03" width="1.81" height="33.94" fill="#6E5DC9"/>
<rect x="507.14" y="493.41" width="2.41" height="37.55" fill="#DE350B"/>
<rect x="507.14" y="488.39" width="2.41" height="3.61" fill="#FFAB00"/>
<rect x="507.14" y="451.24" width="2.41" height="35.74" fill="#0052CC"/>
<rect x="507.14" y="413.09" width="2.41" height="37.15" fill="#2684FF"/>
<rect x="507.14" y="383.15" width="2.41" height="28.53" fill="#008DA6"/>
<rect x="507.14" y="342.39" width="2.41" height="39.16" fill="#8777D9"/>
<rect x="539.87" y="483.37" width="2.01" height="11.45" fill="#403294"/>
<rect x="539.87" y="495.82" width="2.01" height="35.14" fill="#00B8D9"/>
<rect x="543.24" y="497.83" width="1.71" height="33.13" fill="#5E8C7A"/>
<rect x="545.90" y="492.41" width="2.01" height="3.01" fill="#006644"/>
<rect x="545.90" y="496.43" width="2.01" height="34.54" fill="#6E5DC9"/>
<rect x="549.51" y="526.14" width="2.61" height="4.82" fill="#FFAB00"/>
<rect x="549.51" y="488.39" width="2.61" height="36.14" fill="#0052CC"/>
<rect x="549.51" y="450.84" width="2.61" height="36.55" fill="#2684FF"/>
<rect x="549.51" y="420.52" width="2.61" height="28.71" fill="#008DA6"/>
<rect x="549.51" y="383.55" width="2.61" height="36.16" fill="#8777D9"/>
<rect x="549.51" y="344.40" width="2.61" height="37.55" fill="#DE350B"/>
<rect x="549.51" y="342.19" width="2.61" height="1.41" fill="#8777D9"/>
<rect x="578.43" y="406.06" width="2.01" height="13.65" fill="#403294"/>
<rect x="578.43" y="420.52" width="2.01" height="36.75" fill="#00B8D9"/>
<rect x="578.43" y="458.27" width="2.01" height="36.14" fill="#006644"/>
<rect x="578.43" y="496.02" width="2.01" height="34.94" fill="#6E5DC9"/>
<rect x="581.84" y="526.14" width="2.61" height="4.82" fill="#FFAB00"/>
<rect x="581.84" y="488.39" width="2.61" height="36.14" fill="#0052CC"/>
<rect x="581.84" y="450.84" width="2.61" height="36.55" fill="#2684FF"/>
<rect x="581.84" y="420.52" width="2.61" height="28.71" fill="#008DA6"/>
<rect x="581.84" y="383.55" width="2.61" height="36.16" fill="#8777D9"/>
<rect x="581.84" y="344.40" width="2.61" height="37.55" fill="#DE350B"/>
<rect x="581.84" y="342.19" width="2.61" height="1.41" fill="#8777D9"/>
<rect x="617.18" y="406.06" width="2.01" height="13.65" fill="#403294"/>
<rect x="617.18" y="420.52" width="2.01" height="36.75" fill="#00B8D9"/>
<rect x="617.18" y="458.27" width="2.01" height="36.14" fill="#006644"/>
<rect x="617.18" y="496.02" width="2.01" height="34.94" fill="#6E5DC9"/>
<rect x="620.60" y="526.14" width="2.61" height="4.82" fill="#FFAB00"/>
<rect x="620.60" y="488.39" width="2.61" height="36.14" fill="#0052CC"/>
<rect x="620.60" y="450.84" width="2.61" height="36.55" fill="#2684FF"/>
<rect x="620.60" y="420.52" width="2.61" height="28.71" fill="#008DA6"/>
<rect x="620.60" y="383.55" width="2.61" height="36.16" fill="#8777D9"/>
<rect x="620.60" y="344.40" width="2.61" height="37.55" fill="#DE350B"/>
<rect x="620.60" y="342.19" width="2.61" height="1.41" fill="#8777D9"/>
<rect x="656.14" y="444.82" width="2.21" height="13.45" fill="#403294"/>
<rect x="656.14" y="459.28" width="2.21" height="37.15" fill="#00B8D9"/>
<rect x="656.14" y="498.43" width="2.21" height="32.53" fill="#006644"/>
<rect x="662.16" y="493.41" width="2.61" height="37.55" fill="#DE350B"/>
<rect x="662.16" y="488.39" width="2.61" height="3.61" fill="#FFAB00"/>
<rect x="662.16" y="451.24" width="2.61" height="35.74" fill="#0052CC"/>
<rect x="662.16" y="413.09" width="2.61" height="37.15" fill="#2684FF"/>
<rect x="662.16" y="383.15" width="2.61" height="28.53" fill="#008DA6"/>
<rect x="662.16" y="344.40" width="2.61" height="37.15" fill="#8777D9"/>
<rect x="662.16" y="306.85" width="2.61" height="36.14" fill="#6E5DC9"/>
<rect x="662.16" y="303.23" width="2.61" height="2.01" fill="#006644"/>
<rect x="698.34" y="528.55" width="1.51" height="2.41" fill="#403294"/>
<rect x="701.40" y="483.37" width="2.01" height="11.45" fill="#403294"/>
<rect x="701.40" y="495.82" width="2.01" height="35.14" fill="#00B8D9"/>
<rect x="704.81" y="495.42" width="2.21" height="1.81" fill="#00B8D9"/>
<rect x="704.81" y="498.03" width="2.21" height="32.93" fill="#006644"/>
<rect x="708.03" y="492.41" width="1.81" height="2.01" fill="#006644"/>
<rect x="708.03" y="495.42" width="1.81" height="35.54" fill="#A79CE3"/>
<rect x="711.04" y="526.14" width="2.81" height="4.82" fill="#FFAB00"/>
<rect x="711.04" y="488.39" width="2.81" height="36.14" fill="#0052CC"/>
<rect x="711.04" y="450.84" width="2.81" height="36.55" fill="#2684FF"/>
<rect x="711.04" y="420.52" width="2.81" height="28.71" fill="#008DA6"/>
<rect x="711.04" y="383.55" width="2.81" height="36.16" fill="#8777D9"/>
<rect x="711.04" y="344.40" width="2.81" height="37.55" fill="#DE350B"/>
<rect x="711.04" y="342.19" width="2.81" height="1.41" fill="#8777D9"/>
<rect x="733.53" y="483.37" width="2.01" height="11.45" fill="#403294"/>
<rect x="733.53" y="495.82" width="2.01" height="35.14" fill="#00B8D9"/>
<rect x="737.09" y="497.43" width="1.71" height="33.53" fill="#A79CE3"/>
<rect x="739.75" y="492.41" width="2.21" height="3.01" fill="#006644"/>
<rect x="739.75" y="496.43" width="2.21" height="34.54" fill="#6E5DC9"/>
<rect x="743.37" y="526.14" width="2.61" height="4.82" fill="#FFAB00"/>
<rect x="743.37" y="488.39" width="2.61" height="36.14" fill="#0052CC"/>
<rect x="743.37" y="450.84" width="2.61" height="36.55" fill="#2684FF"/>
<rect x="743.37" y="420.52" width="2.61" height="28.71" fill="#008DA6"/>
<rect x="743.37" y="383.55" width="2.61" height="36.16" fill="#8777D9"/>
<rect x="743.37" y="344.40" width="2.61" height="37.55" fill="#DE350B"/>
<rect x="743.37" y="342.19" width="2.61" height="1.41" fill="#8777D9"/>
<rect x="778.71" y="528.55" width="1.81" height="2.41" fill="#403294"/>
<rect x="782.32" y="483.37" width="2.01" height="11.45" fill="#403294"/>
<rect x="782.32" y="495.82" width="2.01" height="35.14" fill="#00B8D9"/>
<rect x="785.69" y="498.03" width="1.71" height="32.93" fill="#006644"/>
<rect x="788.35" y="492.01" width="2.21" height="34.54" fill="#6E5DC9"/>
<rect x="788.35" y="527.15" width="2.21" height="3.82" fill="#006644"/>
<rect x="791.96" y="526.14" width="2.81" height="4.82" fill="#FFAB00"/>
<rect x="791.96" y="488.39" width="2.81" height="36.14" fill="#0052CC"/>
<rect x="791.96" y="450.84" width="2.81" height="36.55" fill="#2684FF"/>
<rect x="791.96" y="420.52" width="2.81" height="28.71" fill="#008DA6"/>
<rect x="791.96" y="383.55" width="2.81" height="36.16" fill="#8777D9"/>
<rect x="791.96" y="344.40" width="2.81" height="37.55" fill="#DE350B"/>
<rect x="791.96" y="342.19" width="2.81" height="1.41" fill="#8777D9"/>
<rect x="811.44" y="480.96" width="1.81" height="13.86" fill="#403294"/>
<rect x="811.44" y="495.82" width="1.81" height="35.14" fill="#00B8D9"/>
<rect x="814.40" y="497.83" width="1.51" height="33.13" fill="#5E8C7A"/>
<rect x="817.26" y="493.41" width="2.61" height="37.55" fill="#DE350B"/>
<rect x="817.26" y="488.39" width="2.61" height="3.61" fill="#FFAB00"/>
<rect x="817.26" y="451.24" width="2.61" height="35.74" fill="#0052CC"/>
<rect x="817.26" y="413.09" width="2.61" height="37.15" fill="#2684FF"/>
<rect x="817.26" y="383.15" width="2.61" height="28.53" fill="#008DA6"/>
<rect x="817.26" y="344.40" width="2.61" height="37.15" fill="#8777D9"/>
<rect x="817.26" y="306.85" width="2.61" height="36.14" fill="#6E5DC9"/>
<rect x="817.26" y="303.23" width="2.61" height="2.01" fill="#006644"/>
<rect x="856.37" y="510.08" width="1.71" height="13.45" fill="#8777D9"/>
<rect x="856.37" y="524.54" width="1.71" height="6.43" fill="#00B8D9"/>
<rect x="859.43" y="493.41" width="2.21" height="33.13" fill="#6E5DC9"/>
<rect x="859.43" y="527.15" width="2.21" height="3.82" fill="#006644"/>
<rect x="863.05" y="493.41" width="2.61" height="37.55" fill="#DE350B"/>
<rect x="863.05" y="491.41" width="2.61" height="1.41" fill="#8777D9"/>
<rect x="863.05" y="457.27" width="2.61" height="32.53" fill="#006644"/>
<rect x="863.05" y="426.14" width="2.61" height="30.12" fill="#00B8D9"/>
<rect x="863.05" y="419.72" width="2.61" height="4.82" fill="#FFAB00"/>
<rect x="863.05" y="382.15" width="2.61" height="35.96" fill="#0052CC"/>
<rect x="863.05" y="344.40" width="2.61" height="36.14" fill="#2684FF"/>
<rect x="863.05" y="314.88" width="2.61" height="28.11" fill="#008DA6"/>
<rect x="863.05" y="277.13" width="2.61" height="36.14" fill="#8777D9"/>
<rect x="888.15" y="444.82" width="2.41" height="13.45" fill="#403294"/>
<rect x="888.15" y="459.28" width="2.41" height="37.15" fill="#00B8D9"/>
<rect x="888.15" y="498.43" width="2.41" height="32.53" fill="#006644"/>
<rect x="891.71" y="494.02" width="1.71" height="2.01" fill="#006644"/>
<rect x="891.71" y="497.43" width="1.71" height="33.53" fill="#A79CE3"/>
<rect x="894.77" y="493.41" width="2.41" height="37.55" fill="#DE350B"/>
<rect x="894.77" y="488.39" width="2.41" height="3.61" fill="#FFAB00"/>
<rect x="894.77" y="451.24" width="2.41" height="35.74" fill="#0052CC"/>
<rect x="894.77" y="413.09" width="2.41" height="37.15" fill="#2684FF"/>
<rect x="894.77" y="383.15" width="2.41" height="28.53" fill="#008DA6"/>
<rect x="894.77" y="342.39" width="2.41" height="39.16" fill="#8777D9"/>
<rect x="933.88" y="528.55" width="1.51" height="2.41" fill="#403294"/>
<rect x="937.34" y="488.39" width="2.01" height="6.43" fill="#403294"/>
<rect x="937.34" y="495.82" width="2.01" height="35.14" fill="#00B8D9"/>
<rect x="943.37" y="498.03" width="2.01" height="32.93" fill="#006644"/>
<rect x="946.78" y="526.14" width="2.61" height="4.82" fill="#FFAB00"/>
<rect x="946.78" y="488.39" width="2.61" height="36.14" fill="#0052CC"/>
<rect x="946.78" y="450.84" width="2.61" height="36.55" fill="#2684FF"/>
<rect x="946.78" y="420.52" width="2.61" height="28.71" fill="#008DA6"/>
<rect x="946.78" y="383.55" width="2.61" height="36.16" fill="#8777D9"/>
<rect x="946.78" y="344.40" width="2.61" height="37.55" fill="#DE350B"/>
<rect x="946.78" y="306.85" width="2.61" height="36.14" fill="#6E5DC9"/>
<rect x="946.78" y="303.23" width="2.61" height="2.01" fill="#006644"/>
<rect x="966.06" y="407.07" width="2.21" height="13.05" fill="#403294"/>
<rect x="966.06" y="421.12" width="2.21" height="37.15" fill="#00B8D9"/>
<rect x="966.06" y="459.28" width="2.21" height="36.14" fill="#006644"/>
<rect x="966.06" y="497.03" width="2.21" height="33.94" fill="#6E5DC9"/>
<rect x="976.10" y="526.14" width="2.41" height="4.82" fill="#FFAB00"/>
<rect x="976.10" y="488.39" width="2.41" height="36.14" fill="#0052CC"/>
<rect x="976.10" y="450.84" width="2.41" height="36.55" fill="#2684FF"/>
<rect x="976.10" y="420.52" width="2.41" height="28.71" fill="#008DA6"/>
<rect x="976.10" y="383.55" width="2.41" height="36.16" fill="#8777D9"/>
<rect x="976.10" y="344.40" width="2.41" height="37.55" fill="#DE350B"/>
<rect x="976.10" y="342.19" width="2.41" height="1.41" fill="#8777D9"/>
<rect x="1005.01" y="480.96" width="1.81" height="13.86" fill="#403294"/>
<rect x="1005.01" y="495.82" width="1.81" height="35.14" fill="#00B8D9"/>
<rect x="1008.03" y="459.28" width="2.41" height="36.14" fill="#006644"/>
<rect x="1008.03" y="497.03" width="2.41" height="33.94" fill="#6E5DC9"/>
<rect x="1018.07" y="493.41" width="2.61" height="37.55" fill="#DE350B"/>
<rect x="1018.07" y="491.41" width="2.61" height="1.41" fill="#8777D9"/>
<rect x="1018.07" y="486.39" width="2.61" height="3.41" fill="#FFAB00"/>
<rect x="1018.07" y="448.23" width="2.61" height="37.15" fill="#0052CC"/>
<rect x="1018.07" y="410.68" width="2.61" height="36.95" fill="#2684FF"/>
<rect x="1018.07" y="379.54" width="2.61" height="30.14" fill="#008DA6"/>
<rect x="1018.07" y="342.39" width="2.61" height="35.54" fill="#8777D9"/>
<rect x="1043.33" y="488.39" width="2.01" height="6.43" fill="#403294"/>
<rect x="1043.33" y="495.82" width="2.01" height="35.14" fill="#00B8D9"/>
<rect x="1046.69" y="497.83" width="1.51" height="33.13" fill="#5E8C7A"/>
<rect x="1049.35" y="492.41" width="2.41" height="3.01" fill="#006644"/>
<rect x="1049.35" y="496.43" width="2.41" height="34.54" fill="#6E5DC9"/>
<rect x="1056.98" y="478.96" width="1.81" height="9.44" fill="#8777D9"/>
<rect x="1056.98" y="489.40" width="1.81" height="2.01" fill="#8777D9"/>
<rect x="1056.98" y="493.41" width="1.81" height="37.55" fill="#DE350B"/>
<rect x="1059.99" y="526.14" width="2.41" height="4.82" fill="#FFAB00"/>
<rect x="1059.99" y="488.39" width="2.41" height="36.14" fill="#0052CC"/>
<rect x="1059.99" y="450.84" width="2.41" height="36.55" fill="#2684FF"/>
<rect x="1059.99" y="420.52" width="2.41" height="28.71" fill="#008DA6"/>
<rect x="1059.99" y="395.02" width="2.41" height="24.70" fill="#8777D9"/>
<rect x="1082.48" y="407.07" width="2.01" height="13.05" fill="#403294"/>
<rect x="1082.48" y="421.12" width="2.01" height="37.15" fill="#00B8D9"/>
<rect x="1082.48" y="459.28" width="2.01" height="36.14" fill="#006644"/>
<rect x="1082.48" y="497.03" width="2.01" height="33.94" fill="#6E5DC9"/>
<rect x="1092.52" y="526.14" width="2.41" height="4.82" fill="#FFAB00"/>
<rect x="1092.52" y="488.39" width="2.41" height="36.14" fill="#0052CC"/>
<rect x="1092.52" y="450.84" width="2.41" height="36.55" fill="#2684FF"/>
<rect x="1092.52" y="420.52" width="2.41" height="28.71" fill="#008DA6"/>
<rect x="1092.52" y="383.55" width="2.41" height="36.16" fill="#8777D9"/>
<rect x="1092.52" y="344.40" width="2.41" height="37.55" fill="#DE350B"/>
<rect x="1092.52" y="342.19" width="2.41" height="1.41" fill="#8777D9"/>
<rect x="1124.60" y="528.55" width="1.51" height="2.41" fill="#403294"/>
<rect x="1127.26" y="483.37" width="2.21" height="11.45" fill="#403294"/>
<rect x="1127.26" y="495.82" width="2.21" height="35.14" fill="#00B8D9"/>
<rect x="1130.68" y="495.42" width="2.01" height="1.81" fill="#00B8D9"/>
<rect x="1130.68" y="498.03" width="2.01" height="32.93" fill="#006644"/>
<rect x="1133.84" y="492.41" width="1.71" height="2.01" fill="#006644"/>
<rect x="1133.84" y="495.42" width="1.71" height="35.54" fill="#A79CE3"/>
<rect x="1137.10" y="526.14" width="2.61" height="4.82" fill="#FFAB00"/>
<rect x="1137.10" y="488.39" width="2.61" height="36.14" fill="#0052CC"/>
<rect x="1137.10" y="450.84" width="2.61" height="36.55" fill="#2684FF"/>
<rect x="1137.10" y="420.52" width="2.61" height="28.71" fill="#008DA6"/>
<rect x="1137.10" y="383.55" width="2.61" height="36.16" fill="#8777D9"/>
<rect x="1137.10" y="344.40" width="2.61" height="37.55" fill="#DE350B"/>
<rect x="1137.10" y="342.19" width="2.61" height="1.41" fill="#8777D9"/>
<rect x="1159.79" y="407.07" width="2.41" height="13.05" fill="#403294"/>
<rect x="1159.79" y="421.12" width="2.41" height="37.15" fill="#00B8D9"/>
<rect x="1159.79" y="459.28" width="2.41" height="36.14" fill="#006644"/>
<rect x="1159.79" y="497.03" width="2.41" height="33.94" fill="#6E5DC9"/>
<rect x="1169.83" y="526.14" width="2.41" height="4.82" fill="#FFAB00"/>
<rect x="1169.83" y="488.39" width="2.41" height="36.14" fill="#0052CC"/>
<rect x="1169.83" y="450.84" width="2.41" height="36.55" fill="#2684FF"/>
<rect x="1169.83" y="420.52" width="2.41" height="28.71" fill="#008DA6"/>
<rect x="1169.83" y="383.55" width="2.41" height="36.16" fill="#8777D9"/>
<rect x="1169.83" y="344.40" width="2.41" height="37.55" fill="#DE350B"/>
<rect x="1169.83" y="342.19" width="2.41" height="1.41" fill="#8777D9"/>
<rect x="1198.35" y="444.82" width="2.41" height="13.45" fill="#403294"/>
<rect x="1198.35" y="459.28" width="2.41" height="37.15" fill="#00B8D9"/>
<rect x="1198.35" y="498.43" width="2.41" height="32.53" fill="#006644"/>
<rect x="1204.97" y="492.41" width="2.01" height="3.01" fill="#006644"/>
<rect x="1204.97" y="496.43" width="2.01" height="34.54" fill="#6E5DC9"/>
<rect x="1208.39" y="526.14" width="2.41" height="4.82" fill="#FFAB00"/>
<rect x="1208.39" y="488.39" width="2.41" height="36.14" fill="#0052CC"/>
<rect x="1208.39" y="450.84" width="2.41" height="36.55" fill="#2684FF"/>
<rect x="1208.39" y="420.52" width="2.41" height="28.71" fill="#008DA6"/>
<rect x="1208.39" y="383.55" width="2.41" height="36.16" fill="#8777D9"/>
<rect x="1208.39" y="344.40" width="2.41" height="37.55" fill="#DE350B"/>
<rect x="1208.39" y="342.19" width="2.41" height="1.41" fill="#8777D9"/>
<rect x="1237.50" y="488.39" width="2.01" height="6.43" fill="#403294"/>
<rect x="1237.50" y="495.82" width="2.01" height="35.14" fill="#00B8D9"/>
<rect x="1240.67" y="497.83" width="1.51" height="33.13" fill="#5E8C7A"/>
<rect x="1243.53" y="526.14" width="2.41" height="4.82" fill="#FFAB00"/>
<rect x="1243.53" y="488.39" width="2.41" height="36.14" fill="#0052CC"/>
<rect x="1243.53" y="450.84" width="2.41" height="36.55" fill="#2684FF"/>
<rect x="1243.53" y="420.52" width="2.41" height="28.71" fill="#008DA6"/>
<rect x="1243.53" y="394.60" width="2.41" height="25.12" fill="#8777D9"/>
<rect x="1243.53" y="361.06" width="2.41" height="31.93" fill="#6E5DC9"/>
<rect x="1243.53" y="357.45" width="2.41" height="2.01" fill="#006644"/>
<rect x="1251.16" y="478.96" width="2.01" height="9.44" fill="#8777D9"/>
<rect x="1251.16" y="489.40" width="2.01" height="2.01" fill="#8777D9"/>
<rect x="1251.16" y="493.41" width="2.01" height="37.55" fill="#DE350B"/>
<rect x="1276.66" y="484.38" width="2.01" height="10.44" fill="#403294"/>
<rect x="1276.66" y="495.82" width="2.01" height="35.14" fill="#00B8D9"/>
<rect x="1279.82" y="497.83" width="1.31" height="33.13" fill="#5E8C7A"/>
<rect x="1282.28" y="492.41" width="2.41" height="3.01" fill="#006644"/>
<rect x="1282.28" y="496.43" width="2.41" height="34.54" fill="#6E5DC9"/>
<rect x="1289.91" y="493.41" width="2.41" height="37.55" fill="#DE350B"/>
<rect x="1289.91" y="491.41" width="2.41" height="1.41" fill="#8777D9"/>
<rect x="1289.91" y="486.39" width="2.41" height="3.41" fill="#FFAB00"/>
<rect x="1289.91" y="448.23" width="2.41" height="37.15" fill="#0052CC"/>
<rect x="1289.91" y="410.68" width="2.41" height="36.95" fill="#2684FF"/>
<rect x="1289.91" y="379.54" width="2.41" height="30.14" fill="#008DA6"/>
<rect x="1289.91" y="342.39" width="2.41" height="35.54" fill="#8777D9"/>
<rect x="1321.39" y="528.55" width="1.51" height="2.41" fill="#403294"/>
<rect x="1324.85" y="446.22" width="2.01" height="28.11" fill="#6E5DC9"/>
<rect x="1324.85" y="487.39" width="2.01" height="3.01" fill="#403294"/>
<rect x="1324.85" y="492.01" width="2.01" height="34.94" fill="#00B8D9"/>
<rect x="1324.85" y="527.55" width="2.01" height="3.41" fill="#006644"/>
<rect x="1328.07" y="497.83" width="1.81" height="33.13" fill="#5E8C7A"/>
<rect x="1331.08" y="526.14" width="2.41" height="4.82" fill="#FFAB00"/>
<rect x="1331.08" y="488.39" width="2.41" height="36.14" fill="#0052CC"/>
<rect x="1331.08" y="450.84" width="2.41" height="36.55" fill="#2684FF"/>
<rect x="1331.08" y="420.52" width="2.41" height="28.71" fill="#008DA6"/>
<rect x="1331.08" y="383.55" width="2.41" height="36.16" fill="#8777D9"/>
<rect x="1331.08" y="344.40" width="2.41" height="37.55" fill="#DE350B"/>
<rect x="1331.08" y="342.19" width="2.41" height="1.41" fill="#8777D9"/>
<rect x="1353.57" y="480.96" width="2.01" height="13.86" fill="#403294"/>
<rect x="1353.57" y="495.82" width="2.01" height="35.14" fill="#00B8D9"/>
<rect x="1357.18" y="459.28" width="2.21" height="36.14" fill="#006644"/>
<rect x="1357.18" y="497.03" width="2.21" height="33.94" fill="#6E5DC9"/>
<rect x="1363.21" y="526.14" width="2.61" height="4.82" fill="#FFAB00"/>
<rect x="1363.21" y="488.39" width="2.61" height="36.14" fill="#0052CC"/>
<rect x="1363.21" y="450.84" width="2.61" height="36.55" fill="#2684FF"/>
<rect x="1363.21" y="420.52" width="2.61" height="28.71" fill="#008DA6"/>
<rect x="1363.21" y="383.55" width="2.61" height="36.16" fill="#8777D9"/>
<rect x="1363.21" y="344.40" width="2.61" height="37.55" fill="#DE350B"/>
<rect x="1363.21" y="342.19" width="2.61" height="1.41" fill="#8777D9"/>
<rect x="1392.36" y="484.38" width="2.01" height="10.44" fill="#403294"/>
<rect x="1392.36" y="495.82" width="2.01" height="35.14" fill="#00B8D9"/>
<rect x="1395.73" y="497.83" width="1.51" height="33.13" fill="#5E8C7A"/>
<rect x="1398.39" y="492.41" width="2.01" height="3.01" fill="#006644"/>
<rect x="1398.39" y="496.43" width="2.01" height="34.54" fill="#6E5DC9"/>
<rect x="1402.00" y="486.39" width="2.41" height="31.12" fill="#DE350B"/>
<rect x="1402.00" y="519.52" width="2.41" height="11.45" fill="#8777D9"/>
<rect x="1405.82" y="526.14" width="2.61" height="4.82" fill="#FFAB00"/>
<rect x="1405.82" y="488.39" width="2.61" height="36.14" fill="#0052CC"/>
<rect x="1405.82" y="450.84" width="2.61" height="36.55" fill="#2684FF"/>
<rect x="1405.82" y="420.52" width="2.61" height="28.71" fill="#008DA6"/>
<rect x="1405.82" y="395.02" width="2.61" height="24.70" fill="#8777D9"/>
<rect x="1431.12" y="526.14" width="2.41" height="4.82" fill="#FFAB00"/>
<rect x="1431.12" y="488.39" width="2.41" height="36.14" fill="#0052CC"/>
<rect x="1431.12" y="450.84" width="2.41" height="36.55" fill="#2684FF"/>
<rect x="1431.12" y="420.52" width="2.41" height="28.71" fill="#008DA6"/>
<rect x="1431.12" y="416.10" width="2.41" height="3.21" fill="#8777D9"/>
<rect x="1473.69" y="483.37" width="2.01" height="11.45" fill="#403294"/>
<rect x="1473.69" y="495.82" width="2.01" height="35.14" fill="#00B8D9"/>
<rect x="1476.50" y="496.43" width="2.01" height="32.13" fill="#006644"/>
<rect x="1476.50" y="528.96" width="2.01" height="2.01" fill="#00B8D9"/>
<rect x="1479.71" y="492.01" width="2.01" height="34.54" fill="#6E5DC9"/>
<rect x="1479.71" y="527.15" width="2.01" height="3.82" fill="#006644"/>
<rect x="1483.13" y="493.41" width="2.61" height="37.55" fill="#DE350B"/>
<rect x="1483.13" y="491.41" width="2.61" height="1.41" fill="#8777D9"/>
<rect x="1483.13" y="486.39" width="2.61" height="3.41" fill="#FFAB00"/>
<rect x="1483.13" y="448.23" width="2.61" height="37.15" fill="#0052CC"/>
<rect x="1483.13" y="410.68" width="2.61" height="36.95" fill="#2684FF"/>
<rect x="1483.13" y="379.54" width="2.61" height="30.14" fill="#008DA6"/>
<rect x="1483.13" y="342.39" width="2.61" height="35.54" fill="#8777D9"/>
<rect x="1512.39" y="529.56" width="1.71" height="1.41" fill="#403294"/>
<rect x="1514.85" y="437.19" width="2.41" height="3.01" fill="#006644"/>
<rect x="1514.85" y="441.20" width="2.41" height="35.14" fill="#6E5DC9"/>
<rect x="1514.85" y="477.35" width="2.41" height="17.07" fill="#403294"/>
<rect x="1514.85" y="495.82" width="2.41" height="35.14" fill="#00B8D9"/>
<rect x="1518.27" y="498.43" width="2.41" height="32.53" fill="#006644"/>
<rect x="1518.27" y="491.00" width="2.41" height="3.82" fill="#FFAB00"/>
<rect x="1518.27" y="452.25" width="2.41" height="37.15" fill="#0052CC"/>
<rect x="1518.27" y="413.09" width="2.41" height="37.15" fill="#2684FF"/>
<rect x="1518.27" y="384.56" width="2.41" height="27.13" fill="#008DA6"/>
<rect x="1518.27" y="347.01" width="2.41" height="35.54" fill="#8777D9"/>
<rect x="1518.27" y="309.66" width="2.41" height="35.74" fill="#DE350B"/>
<rect x="1518.27" y="307.25" width="2.41" height="1.61" fill="#8777D9"/>
<rect x="1550.95" y="528.15" width="1.51" height="2.81" fill="#403294"/>
<rect x="1553.61" y="508.88" width="2.21" height="13.65" fill="#8777D9"/>
<rect x="1553.61" y="524.14" width="2.21" height="6.83" fill="#00B8D9"/>
<rect x="1557.02" y="491.41" width="2.41" height="35.14" fill="#6E5DC9"/>
<rect x="1557.02" y="527.15" width="2.41" height="3.82" fill="#006644"/>
<rect x="1560.64" y="493.41" width="2.81" height="37.55" fill="#DE350B"/>
<rect x="1560.64" y="491.41" width="2.81" height="1.41" fill="#8777D9"/>
<rect x="1560.64" y="457.27" width="2.81" height="32.53" fill="#006644"/>
<rect x="1560.64" y="426.14" width="2.81" height="30.12" fill="#00B8D9"/>
<rect x="1560.64" y="420.12" width="2.81" height="5.02" fill="#FFAB00"/>
<rect x="1560.64" y="383.15" width="2.81" height="35.96" fill="#0052CC"/>
<rect x="1560.64" y="345.80" width="2.81" height="35.74" fill="#2684FF"/>
<rect x="1560.64" y="315.68" width="2.81" height="28.11" fill="#008DA6"/>
<rect x="1560.64" y="278.73" width="2.81" height="35.54" fill="#8777D9"/>
<rect x="1586.14" y="444.82" width="2.01" height="13.45" fill="#403294"/>
<rect x="1586.14" y="459.28" width="2.01" height="37.15" fill="#00B8D9"/>
<rect x="1586.14" y="498.43" width="2.01" height="32.53" fill="#006644"/>
<rect x="1589.50" y="491.41" width="1.51" height="3.01" fill="#006644"/>
<rect x="1589.50" y="495.42" width="1.51" height="35.54" fill="#A79CE3"/>
<rect x="1592.16" y="493.41" width="2.41" height="37.55" fill="#DE350B"/>
<rect x="1592.16" y="488.39" width="2.41" height="3.61" fill="#FFAB00"/>
<rect x="1592.16" y="451.24" width="2.41" height="35.74" fill="#0052CC"/>
<rect x="1592.16" y="413.09" width="2.41" height="37.15" fill="#2684FF"/>
<rect x="1592.16" y="383.15" width="2.41" height="28.53" fill="#008DA6"/>
<rect x="1592.16" y="342.39" width="2.41" height="39.16" fill="#8777D9"/>
<rect x="1624.89" y="480.96" width="2.01" height="13.86" fill="#403294"/>
<rect x="1624.89" y="495.82" width="2.01" height="35.14" fill="#00B8D9"/>
<rect x="1628.11" y="453.86" width="1.81" height="3.41" fill="#8777D9"/>
<rect x="1628.11" y="458.27" width="1.81" height="36.14" fill="#006644"/>
<rect x="1628.11" y="495.82" width="1.81" height="35.14" fill="#A79CE3"/>
<rect x="1631.32" y="493.41" width="2.41" height="37.55" fill="#DE350B"/>
<rect x="1631.32" y="488.39" width="2.41" height="3.61" fill="#FFAB00"/>
<rect x="1631.32" y="451.24" width="2.41" height="35.74" fill="#0052CC"/>
<rect x="1631.32" y="413.09" width="2.41" height="37.15" fill="#2684FF"/>
<rect x="1631.32" y="383.15" width="2.41" height="28.53" fill="#008DA6"/>
<rect x="1631.32" y="342.39" width="2.41" height="39.16" fill="#8777D9"/>
<rect x="1663.45" y="483.37" width="2.01" height="11.45" fill="#403294"/>
<rect x="1663.45" y="495.82" width="2.01" height="35.14" fill="#00B8D9"/>
<rect x="1666.81" y="492.41" width="1.71" height="2.01" fill="#00B8D9"/>
<rect x="1666.81" y="495.82" width="1.71" height="35.14" fill="#5E8C7A"/>
<rect x="1669.67" y="492.41" width="2.01" height="3.01" fill="#006644"/>
<rect x="1669.67" y="496.43" width="2.01" height="34.54" fill="#6E5DC9"/>
<rect x="1673.09" y="526.14" width="2.81" height="4.82" fill="#FFAB00"/>
<rect x="1673.09" y="488.39" width="2.81" height="36.14" fill="#0052CC"/>
<rect x="1673.09" y="450.84" width="2.81" height="36.55" fill="#2684FF"/>
<rect x="1673.09" y="420.52" width="2.81" height="28.71" fill="#008DA6"/>
<rect x="1673.09" y="383.55" width="2.81" height="36.16" fill="#8777D9"/>
<rect x="1673.09" y="344.40" width="2.81" height="37.55" fill="#DE350B"/>
<rect x="1673.09" y="342.19" width="2.81" height="1.41" fill="#8777D9"/>
<rect x="298" y="530.9" width="1395" height="1.2" fill="#333"/>
<text x="279.8" y="255.2" text-anchor="end" font-size="16" fill="#444">300</text>
<text x="279.8" y="349.4" text-anchor="end" font-size="16" fill="#444">200</text>
<text x="279.8" y="443.4" text-anchor="end" font-size="16" fill="#444">100</text>
<text x="279.8" y="537.4" text-anchor="end" font-size="16" fill="#444">0</text>
<text transform="translate(240.6 390) rotate(-90)" text-anchor="middle" font-size="16" fill="#757575">Sum of Time (hours)</text>
<text x="996" y="616" text-anchor="middle" font-size="16" fill="#757575">Key</text>
<text transform="translate(320.77 560.0) rotate(-44.5)" text-anchor="end" font-size="16" fill="#222">ND-1</text>
<text transform="translate(359.52 560.0) rotate(-44.5)" text-anchor="end" font-size="16" fill="#222">ND-10</text>
<text transform="translate(398.27 560.0) rotate(-44.5)" text-anchor="end" font-size="16" fill="#222">ND-12</text>
<text transform="translate(437.02 560.0) rotate(-44.5)" text-anchor="end" font-size="16" fill="#222">ND-13</text>
<text transform="translate(475.77 560.0) rotate(-44.5)" text-anchor="end" font-size="16" fill="#222">ND-14</text>
<text transform="translate(514.52 560.0) rotate(-44.5)" text-anchor="end" font-size="16" fill="#222">ND-15</text>
<text transform="translate(553.27 560.0) rotate(-44.5)" text-anchor="end" font-size="16" fill="#222">ND-16</text>
<text transform="translate(592.02 560.0) rotate(-44.5)" text-anchor="end" font-size="16" fill="#222">ND-17</text>
<text transform="translate(630.77 560.0) rotate(-44.5)" text-anchor="end" font-size="16" fill="#222">ND-18</text>
<text transform="translate(669.52 560.0) rotate(-44.5)" text-anchor="end" font-size="16" fill="#222">ND-19</text>
<text transform="translate(708.27 560.0) rotate(-44.5)" text-anchor="end" font-size="16" fill="#222">ND-2</text>
<text transform="translate(747.02 560.0) rotate(-44.5)" text-anchor="end" font-size="16" fill="#222">ND-20</text>
<text transform="translate(785.77 560.0) rotate(-44.5)" text-anchor="end" font-size="16" fill="#222">ND-21</text>
<text transform="translate(824.52 560.0) rotate(-44.5)" text-anchor="end" font-size="16" fill="#222">ND-22</text>
<text transform="translate(863.27 560.0) rotate(-44.5)" text-anchor="end" font-size="16" fill="#222">ND-23</text>
<text transform="translate(902.02 560.0) rotate(-44.5)" text-anchor="end" font-size="16" fill="#222">ND-24</text>
<text transform="translate(940.77 560.0) rotate(-44.5)" text-anchor="end" font-size="16" fill="#222">ND-25</text>
<text transform="translate(979.52 560.0) rotate(-44.5)" text-anchor="end" font-size="16" fill="#222">ND-26</text>
<text transform="translate(1018.27 560.0) rotate(-44.5)" text-anchor="end" font-size="16" fill="#222">ND-27</text>
<text transform="translate(1057.03 560.0) rotate(-44.5)" text-anchor="end" font-size="16" fill="#222">ND-28</text>
<text transform="translate(1095.78 560.0) rotate(-44.5)" text-anchor="end" font-size="16" fill="#222">ND-29</text>
<text transform="translate(1134.53 560.0) rotate(-44.5)" text-anchor="end" font-size="16" fill="#222">ND-3</text>
<text transform="translate(1173.28 560.0) rotate(-44.5)" text-anchor="end" font-size="16" fill="#222">ND-30</text>
<text transform="translate(1212.03 560.0) rotate(-44.5)" text-anchor="end" font-size="16" fill="#222">ND-31</text>
<text transform="translate(1250.78 560.0) rotate(-44.5)" text-anchor="end" font-size="16" fill="#222">ND-32</text>
<text transform="translate(1289.53 560.0) rotate(-44.5)" text-anchor="end" font-size="16" fill="#222">ND-33</text>
<text transform="translate(1328.28 560.0) rotate(-44.5)" text-anchor="end" font-size="16" fill="#222">ND-34</text>
<text transform="translate(1367.03 560.0) rotate(-44.5)" text-anchor="end" font-size="16" fill="#222">ND-35</text>
<text transform="translate(1405.78 560.0) rotate(-44.5)" text-anchor="end" font-size="16" fill="#222">ND-36</text>
<text transform="translate(1444.53 560.0) rotate(-44.5)" text-anchor="end" font-size="16" fill="#222">ND-37</text>
<text transform="translate(1483.28 560.0) rotate(-44.5)" text-anchor="end" font-size="16" fill="#222">ND-4</text>
<text transform="translate(1522.03 560.0) rotate(-44.5)" text-anchor="end" font-size="16" fill="#222">ND-5</text>
<text transform="translate(1560.78 560.0) rotate(-44.5)" text-anchor="end" font-size="16" fill="#222">ND-6</text>
<text transform="translate(1599.53 560.0) rotate(-44.5)" text-anchor="end" font-size="16" fill="#222">ND-7</text>
<text transform="translate(1638.28 560.0) rotate(-44.5)" text-anchor="end" font-size="16" fill="#222">ND-8</text>
<text transform="translate(1677.03 560.0) rotate(-44.5)" text-anchor="end" font-size="16" fill="#222">ND-9</text>
<text x="321.0" y="334.1" text-anchor="middle" font-size="13" font-weight="700" fill="#000" stroke="#fff" stroke-width="2.6" stroke-linejoin="round" paint-order="stroke">201</text>
<text x="359.9" y="334.1" text-anchor="middle" font-size="13" font-weight="700" fill="#000" stroke="#fff" stroke-width="2.6" stroke-linejoin="round" paint-order="stroke">201</text>
<text x="389.4" y="330.1" text-anchor="middle" font-size="13" font-weight="700" fill="#000" stroke="#fff" stroke-width="2.6" stroke-linejoin="round" paint-order="stroke">204</text>
<text x="437.2" y="334.1" text-anchor="middle" font-size="13" font-weight="700" fill="#000" stroke="#fff" stroke-width="2.6" stroke-linejoin="round" paint-order="stroke">201</text>
<text x="469.7" y="296.0" text-anchor="middle" font-size="13" font-weight="700" fill="#000" stroke="#fff" stroke-width="2.6" stroke-linejoin="round" paint-order="stroke">241</text>
<text x="508.4" y="334.1" text-anchor="middle" font-size="13" font-weight="700" fill="#000" stroke="#fff" stroke-width="2.6" stroke-linejoin="round" paint-order="stroke">201</text>
<text x="551.0" y="334.1" text-anchor="middle" font-size="13" font-weight="700" fill="#000" stroke="#fff" stroke-width="2.6" stroke-linejoin="round" paint-order="stroke">201</text>
<text x="582.1" y="334.1" text-anchor="middle" font-size="13" font-weight="700" fill="#000" stroke="#fff" stroke-width="2.6" stroke-linejoin="round" paint-order="stroke">201</text>
<text x="620.9" y="334.1" text-anchor="middle" font-size="13" font-weight="700" fill="#000" stroke="#fff" stroke-width="2.6" stroke-linejoin="round" paint-order="stroke">201</text>
<text x="664.0" y="294.8" text-anchor="middle" font-size="13" font-weight="700" fill="#000" stroke="#fff" stroke-width="2.6" stroke-linejoin="round" paint-order="stroke">242</text>
<text x="310.7" y="464.8" text-anchor="middle" font-size="13" font-weight="700" fill="#000" stroke="#fff" stroke-width="2.6" stroke-linejoin="round" paint-order="stroke">61</text>
<text x="317.7" y="483.9" text-anchor="middle" font-size="13" font-weight="700" fill="#000" stroke="#fff" stroke-width="2.6" stroke-linejoin="round" paint-order="stroke">42</text>
<text x="357.2" y="418.6" text-anchor="middle" font-size="13" font-weight="700" fill="#000" stroke="#fff" stroke-width="2.6" stroke-linejoin="round" paint-order="stroke">110</text>
<text x="353.8" y="499.5" text-anchor="middle" font-size="13" font-weight="700" fill="#000" stroke="#fff" stroke-width="2.6" stroke-linejoin="round" paint-order="stroke">24</text>
<text x="349.8" y="519.0" text-anchor="middle" font-size="13" font-weight="700" fill="#000" stroke="#fff" stroke-width="2.6" stroke-linejoin="round" paint-order="stroke">4</text>
<text x="386.8" y="397.8" text-anchor="middle" font-size="13" font-weight="700" fill="#000" stroke="#fff" stroke-width="2.6" stroke-linejoin="round" paint-order="stroke">133</text>
<text x="431.1" y="458.4" text-anchor="middle" font-size="13" font-weight="700" fill="#000" stroke="#fff" stroke-width="2.6" stroke-linejoin="round" paint-order="stroke">68</text>
<text x="433.6" y="483.9" text-anchor="middle" font-size="13" font-weight="700" fill="#000" stroke="#fff" stroke-width="2.6" stroke-linejoin="round" paint-order="stroke">42</text>
<text x="476.3" y="473.4" text-anchor="middle" font-size="13" font-weight="700" fill="#000" stroke="#fff" stroke-width="2.6" stroke-linejoin="round" paint-order="stroke">52</text>
<text x="466.3" y="521.0" text-anchor="middle" font-size="13" font-weight="700" fill="#000" stroke="#fff" stroke-width="2.6" stroke-linejoin="round" paint-order="stroke">2</text>
<text x="504.8" y="447.0" text-anchor="middle" font-size="13" font-weight="700" fill="#000" stroke="#fff" stroke-width="2.6" stroke-linejoin="round" paint-order="stroke">80</text>
<text x="500.8" y="471.1" text-anchor="middle" font-size="13" font-weight="700" fill="#000" stroke="#fff" stroke-width="2.6" stroke-linejoin="round" paint-order="stroke">54</text>
<text x="546.6" y="483.9" text-anchor="middle" font-size="13" font-weight="700" fill="#000" stroke="#fff" stroke-width="2.6" stroke-linejoin="round" paint-order="stroke">41</text>
<text x="580.7" y="397.8" text-anchor="middle" font-size="13" font-weight="700" fill="#000" stroke="#fff" stroke-width="2.6" stroke-linejoin="round" paint-order="stroke">133</text>
<text x="619.3" y="397.8" text-anchor="middle" font-size="13" font-weight="700" fill="#000" stroke="#fff" stroke-width="2.6" stroke-linejoin="round" paint-order="stroke">133</text>
<text x="656.4" y="435.7" text-anchor="middle" font-size="13" font-weight="700" fill="#000" stroke="#fff" stroke-width="2.6" stroke-linejoin="round" paint-order="stroke">92</text>
<text x="659.9" y="521.6" text-anchor="middle" font-size="13" font-weight="700" fill="#000" stroke="#fff" stroke-width="2.6" stroke-linejoin="round" paint-order="stroke">0</text>
<text x="702.5" y="466.7" text-anchor="middle" font-size="13" font-weight="700" fill="#000" stroke="#fff" stroke-width="2.6" stroke-linejoin="round" paint-order="stroke">58</text>
<text x="708.7" y="483.9" text-anchor="middle" font-size="13" font-weight="700" fill="#000" stroke="#fff" stroke-width="2.6" stroke-linejoin="round" paint-order="stroke">42</text>
<text x="698.7" y="519.6" text-anchor="middle" font-size="13" font-weight="700" fill="#000" stroke="#fff" stroke-width="2.6" stroke-linejoin="round" paint-order="stroke">3</text>
<text x="740.3" y="483.9" text-anchor="middle" font-size="13" font-weight="700" fill="#000" stroke="#fff" stroke-width="2.6" stroke-linejoin="round" paint-order="stroke">41</text>
<text x="789.5" y="483.9" text-anchor="middle" font-size="13" font-weight="700" fill="#000" stroke="#fff" stroke-width="2.6" stroke-linejoin="round" paint-order="stroke">41</text>
<text x="779.4" y="519.6" text-anchor="middle" font-size="13" font-weight="700" fill="#000" stroke="#fff" stroke-width="2.6" stroke-linejoin="round" paint-order="stroke">3</text>
<text x="811.5" y="471.1" text-anchor="middle" font-size="13" font-weight="700" fill="#000" stroke="#fff" stroke-width="2.6" stroke-linejoin="round" paint-order="stroke">54</text>
<text x="815.0" y="486.5" text-anchor="middle" font-size="13" font-weight="700" fill="#000" stroke="#fff" stroke-width="2.6" stroke-linejoin="round" paint-order="stroke">38</text>
<text x="859.1" y="484.5" text-anchor="middle" font-size="13" font-weight="700" fill="#000" stroke="#fff" stroke-width="2.6" stroke-linejoin="round" paint-order="stroke">41</text>
<text x="853.7" y="521.6" text-anchor="middle" font-size="13" font-weight="700" fill="#000" stroke="#fff" stroke-width="2.6" stroke-linejoin="round" paint-order="stroke">0</text>
<text x="888.9" y="435.7" text-anchor="middle" font-size="13" font-weight="700" fill="#000" stroke="#fff" stroke-width="2.6" stroke-linejoin="round" paint-order="stroke">92</text>
<text x="891.5" y="483.9" text-anchor="middle" font-size="13" font-weight="700" fill="#000" stroke="#fff" stroke-width="2.6" stroke-linejoin="round" paint-order="stroke">41</text>
<text x="944.7" y="486.5" text-anchor="middle" font-size="13" font-weight="700" fill="#000" stroke="#fff" stroke-width="2.6" stroke-linejoin="round" paint-order="stroke">38</text>
<text x="934.6" y="519.6" text-anchor="middle" font-size="13" font-weight="700" fill="#000" stroke="#fff" stroke-width="2.6" stroke-linejoin="round" paint-order="stroke">3</text>
<text x="968.2" y="399.2" text-anchor="middle" font-size="13" font-weight="700" fill="#000" stroke="#fff" stroke-width="2.6" stroke-linejoin="round" paint-order="stroke">132</text>
<text x="973.6" y="521.6" text-anchor="middle" font-size="13" font-weight="700" fill="#000" stroke="#fff" stroke-width="2.6" stroke-linejoin="round" paint-order="stroke">0</text>
<text x="1008.9" y="448.7" text-anchor="middle" font-size="13" font-weight="700" fill="#000" stroke="#fff" stroke-width="2.6" stroke-linejoin="round" paint-order="stroke">78</text>
<text x="1004.7" y="471.1" text-anchor="middle" font-size="13" font-weight="700" fill="#000" stroke="#fff" stroke-width="2.6" stroke-linejoin="round" paint-order="stroke">54</text>
<text x="1012.0" y="521.6" text-anchor="middle" font-size="13" font-weight="700" fill="#000" stroke="#fff" stroke-width="2.6" stroke-linejoin="round" paint-order="stroke">0</text>
<text x="712.0" y="334.1" text-anchor="middle" font-size="13" font-weight="700" fill="#000" stroke="#fff" stroke-width="2.6" stroke-linejoin="round" paint-order="stroke">201</text>
<text x="744.7" y="334.1" text-anchor="middle" font-size="13" font-weight="700" fill="#000" stroke="#fff" stroke-width="2.6" stroke-linejoin="round" paint-order="stroke">201</text>
<text x="793.5" y="334.1" text-anchor="middle" font-size="13" font-weight="700" fill="#000" stroke="#fff" stroke-width="2.6" stroke-linejoin="round" paint-order="stroke">201</text>
<text x="819.0" y="295.0" text-anchor="middle" font-size="13" font-weight="700" fill="#000" stroke="#fff" stroke-width="2.6" stroke-linejoin="round" paint-order="stroke">242</text>
<text x="864.2" y="269.3" text-anchor="middle" font-size="13" font-weight="700" fill="#000" stroke="#fff" stroke-width="2.6" stroke-linejoin="round" paint-order="stroke">270</text>
<text x="896.3" y="332.1" text-anchor="middle" font-size="13" font-weight="700" fill="#000" stroke="#fff" stroke-width="2.6" stroke-linejoin="round" paint-order="stroke">202</text>
<text x="949.0" y="295.0" text-anchor="middle" font-size="13" font-weight="700" fill="#000" stroke="#fff" stroke-width="2.6" stroke-linejoin="round" paint-order="stroke">242</text>
<text x="977.6" y="332.1" text-anchor="middle" font-size="13" font-weight="700" fill="#000" stroke="#fff" stroke-width="2.6" stroke-linejoin="round" paint-order="stroke">202</text>
<text x="1019.0" y="332.1" text-anchor="middle" font-size="13" font-weight="700" fill="#000" stroke="#fff" stroke-width="2.6" stroke-linejoin="round" paint-order="stroke">202</text>
<text x="1047.4" y="486.5" text-anchor="middle" font-size="13" font-weight="700" fill="#000" stroke="#fff" stroke-width="2.6" stroke-linejoin="round" paint-order="stroke">38</text>
<text x="1057.7" y="470.1" text-anchor="middle" font-size="13" font-weight="700" fill="#000" stroke="#fff" stroke-width="2.6" stroke-linejoin="round" paint-order="stroke">56</text>
<text x="1055.1" y="521.6" text-anchor="middle" font-size="13" font-weight="700" fill="#000" stroke="#fff" stroke-width="2.6" stroke-linejoin="round" paint-order="stroke">0</text>
<text x="1089.8" y="521.6" text-anchor="middle" font-size="13" font-weight="700" fill="#000" stroke="#fff" stroke-width="2.6" stroke-linejoin="round" paint-order="stroke">0</text>
<text x="1128.8" y="466.7" text-anchor="middle" font-size="13" font-weight="700" fill="#000" stroke="#fff" stroke-width="2.6" stroke-linejoin="round" paint-order="stroke">58</text>
<text x="1134.8" y="483.5" text-anchor="middle" font-size="13" font-weight="700" fill="#000" stroke="#fff" stroke-width="2.6" stroke-linejoin="round" paint-order="stroke">42</text>
<text x="1124.8" y="519.6" text-anchor="middle" font-size="13" font-weight="700" fill="#000" stroke="#fff" stroke-width="2.6" stroke-linejoin="round" paint-order="stroke">3</text>
<text x="1167.1" y="521.6" text-anchor="middle" font-size="13" font-weight="700" fill="#000" stroke="#fff" stroke-width="2.6" stroke-linejoin="round" paint-order="stroke">0</text>
<text x="1199.0" y="435.7" text-anchor="middle" font-size="13" font-weight="700" fill="#000" stroke="#fff" stroke-width="2.6" stroke-linejoin="round" paint-order="stroke">92</text>
<text x="1205.7" y="484.5" text-anchor="middle" font-size="13" font-weight="700" fill="#000" stroke="#fff" stroke-width="2.6" stroke-linejoin="round" paint-order="stroke">41</text>
<text x="1201.9" y="521.6" text-anchor="middle" font-size="13" font-weight="700" fill="#000" stroke="#fff" stroke-width="2.6" stroke-linejoin="round" paint-order="stroke">0</text>
<text x="1241.2" y="486.5" text-anchor="middle" font-size="13" font-weight="700" fill="#000" stroke="#fff" stroke-width="2.6" stroke-linejoin="round" paint-order="stroke">38</text>
<text x="1251.3" y="470.1" text-anchor="middle" font-size="13" font-weight="700" fill="#000" stroke="#fff" stroke-width="2.6" stroke-linejoin="round" paint-order="stroke">56</text>
<text x="1248.7" y="521.6" text-anchor="middle" font-size="13" font-weight="700" fill="#000" stroke="#fff" stroke-width="2.6" stroke-linejoin="round" paint-order="stroke">0</text>
<text x="1283.6" y="484.5" text-anchor="middle" font-size="13" font-weight="700" fill="#000" stroke="#fff" stroke-width="2.6" stroke-linejoin="round" paint-order="stroke">40</text>
<text x="1287.2" y="521.6" text-anchor="middle" font-size="13" font-weight="700" fill="#000" stroke="#fff" stroke-width="2.6" stroke-linejoin="round" paint-order="stroke">0</text>
<text x="1325.2" y="435.7" text-anchor="middle" font-size="13" font-weight="700" fill="#000" stroke="#fff" stroke-width="2.6" stroke-linejoin="round" paint-order="stroke">92</text>
<text x="1328.8" y="485.5" text-anchor="middle" font-size="13" font-weight="700" fill="#000" stroke="#fff" stroke-width="2.6" stroke-linejoin="round" paint-order="stroke">38</text>
<text x="1322.1" y="519.6" text-anchor="middle" font-size="13" font-weight="700" fill="#000" stroke="#fff" stroke-width="2.6" stroke-linejoin="round" paint-order="stroke">3</text>
<text x="1357.9" y="448.7" text-anchor="middle" font-size="13" font-weight="700" fill="#000" stroke="#fff" stroke-width="2.6" stroke-linejoin="round" paint-order="stroke">78</text>
<text x="1353.7" y="471.1" text-anchor="middle" font-size="13" font-weight="700" fill="#000" stroke="#fff" stroke-width="2.6" stroke-linejoin="round" paint-order="stroke">54</text>
<text x="1360.9" y="521.6" text-anchor="middle" font-size="13" font-weight="700" fill="#000" stroke="#fff" stroke-width="2.6" stroke-linejoin="round" paint-order="stroke">0</text>
<text x="1402.1" y="469.1" text-anchor="middle" font-size="13" font-weight="700" fill="#000" stroke="#fff" stroke-width="2.6" stroke-linejoin="round" paint-order="stroke">57</text>
<text x="1399.9" y="484.5" text-anchor="middle" font-size="13" font-weight="700" fill="#000" stroke="#fff" stroke-width="2.6" stroke-linejoin="round" paint-order="stroke">40</text>
<text x="1061.7" y="386.3" text-anchor="middle" font-size="13" font-weight="700" fill="#000" stroke="#fff" stroke-width="2.6" stroke-linejoin="round" paint-order="stroke">146</text>
<text x="1093.8" y="332.1" text-anchor="middle" font-size="13" font-weight="700" fill="#000" stroke="#fff" stroke-width="2.6" stroke-linejoin="round" paint-order="stroke">202</text>
<text x="1138.4" y="334.1" text-anchor="middle" font-size="13" font-weight="700" fill="#000" stroke="#fff" stroke-width="2.6" stroke-linejoin="round" paint-order="stroke">201</text>
<text x="1171.5" y="332.1" text-anchor="middle" font-size="13" font-weight="700" fill="#000" stroke="#fff" stroke-width="2.6" stroke-linejoin="round" paint-order="stroke">202</text>
<text x="1161.5" y="397.4" text-anchor="middle" font-size="13" font-weight="700" fill="#000" stroke="#fff" stroke-width="2.6" stroke-linejoin="round" paint-order="stroke">132</text>
<text x="1210.0" y="332.1" text-anchor="middle" font-size="13" font-weight="700" fill="#000" stroke="#fff" stroke-width="2.6" stroke-linejoin="round" paint-order="stroke">202</text>
<text x="1245.2" y="347.2" text-anchor="middle" font-size="13" font-weight="700" fill="#000" stroke="#fff" stroke-width="2.6" stroke-linejoin="round" paint-order="stroke">186</text>
<text x="1290.0" y="332.1" text-anchor="middle" font-size="13" font-weight="700" fill="#000" stroke="#fff" stroke-width="2.6" stroke-linejoin="round" paint-order="stroke">202</text>
<text x="1332.6" y="332.1" text-anchor="middle" font-size="13" font-weight="700" fill="#000" stroke="#fff" stroke-width="2.6" stroke-linejoin="round" paint-order="stroke">202</text>
<text x="1364.9" y="332.1" text-anchor="middle" font-size="13" font-weight="700" fill="#000" stroke="#fff" stroke-width="2.6" stroke-linejoin="round" paint-order="stroke">202</text>
<text x="1406.5" y="386.3" text-anchor="middle" font-size="13" font-weight="700" fill="#000" stroke="#fff" stroke-width="2.6" stroke-linejoin="round" paint-order="stroke">146</text>
<text x="1432.8" y="406.1" text-anchor="middle" font-size="13" font-weight="700" fill="#000" stroke="#fff" stroke-width="2.6" stroke-linejoin="round" paint-order="stroke">123</text>
<text x="1473.4" y="465.4" text-anchor="middle" font-size="13" font-weight="700" fill="#000" stroke="#fff" stroke-width="2.6" stroke-linejoin="round" paint-order="stroke">61</text>
<text x="1479.8" y="483.5" text-anchor="middle" font-size="13" font-weight="700" fill="#000" stroke="#fff" stroke-width="2.6" stroke-linejoin="round" paint-order="stroke">42</text>
<text x="1516.6" y="428.2" text-anchor="middle" font-size="13" font-weight="700" fill="#000" stroke="#fff" stroke-width="2.6" stroke-linejoin="round" paint-order="stroke">100</text>
<text x="1512.5" y="520.6" text-anchor="middle" font-size="13" font-weight="700" fill="#000" stroke="#fff" stroke-width="2.6" stroke-linejoin="round" paint-order="stroke">2</text>
<text x="1557.3" y="483.5" text-anchor="middle" font-size="13" font-weight="700" fill="#000" stroke="#fff" stroke-width="2.6" stroke-linejoin="round" paint-order="stroke">42</text>
<text x="1555.3" y="499.5" text-anchor="middle" font-size="13" font-weight="700" fill="#000" stroke="#fff" stroke-width="2.6" stroke-linejoin="round" paint-order="stroke">24</text>
<text x="1551.1" y="519.0" text-anchor="middle" font-size="13" font-weight="700" fill="#000" stroke="#fff" stroke-width="2.6" stroke-linejoin="round" paint-order="stroke">4</text>
<text x="1586.2" y="435.3" text-anchor="middle" font-size="13" font-weight="700" fill="#000" stroke="#fff" stroke-width="2.6" stroke-linejoin="round" paint-order="stroke">92</text>
<text x="1589.9" y="479.8" text-anchor="middle" font-size="13" font-weight="700" fill="#000" stroke="#fff" stroke-width="2.6" stroke-linejoin="round" paint-order="stroke">45</text>
<text x="1628.6" y="444.7" text-anchor="middle" font-size="13" font-weight="700" fill="#000" stroke="#fff" stroke-width="2.6" stroke-linejoin="round" paint-order="stroke">83</text>
<text x="1625.0" y="471.1" text-anchor="middle" font-size="13" font-weight="700" fill="#000" stroke="#fff" stroke-width="2.6" stroke-linejoin="round" paint-order="stroke">54</text>
<text x="1671.2" y="483.5" text-anchor="middle" font-size="13" font-weight="700" fill="#000" stroke="#fff" stroke-width="2.6" stroke-linejoin="round" paint-order="stroke">42</text>
<text x="1483.8" y="334.1" text-anchor="middle" font-size="13" font-weight="700" fill="#000" stroke="#fff" stroke-width="2.6" stroke-linejoin="round" paint-order="stroke">201</text>
<text x="1520.0" y="299.0" text-anchor="middle" font-size="13" font-weight="700" fill="#000" stroke="#fff" stroke-width="2.6" stroke-linejoin="round" paint-order="stroke">238</text>
<text x="1561.3" y="269.3" text-anchor="middle" font-size="13" font-weight="700" fill="#000" stroke="#fff" stroke-width="2.6" stroke-linejoin="round" paint-order="stroke">269</text>
<text x="1593.5" y="334.1" text-anchor="middle" font-size="13" font-weight="700" fill="#000" stroke="#fff" stroke-width="2.6" stroke-linejoin="round" paint-order="stroke">201</text>
<text x="1632.0" y="334.1" text-anchor="middle" font-size="13" font-weight="700" fill="#000" stroke="#fff" stroke-width="2.6" stroke-linejoin="round" paint-order="stroke">201</text>
<text x="1674.6" y="334.1" text-anchor="middle" font-size="13" font-weight="700" fill="#000" stroke="#fff" stroke-width="2.6" stroke-linejoin="round" paint-order="stroke">201</text></svg>
</body></html>
